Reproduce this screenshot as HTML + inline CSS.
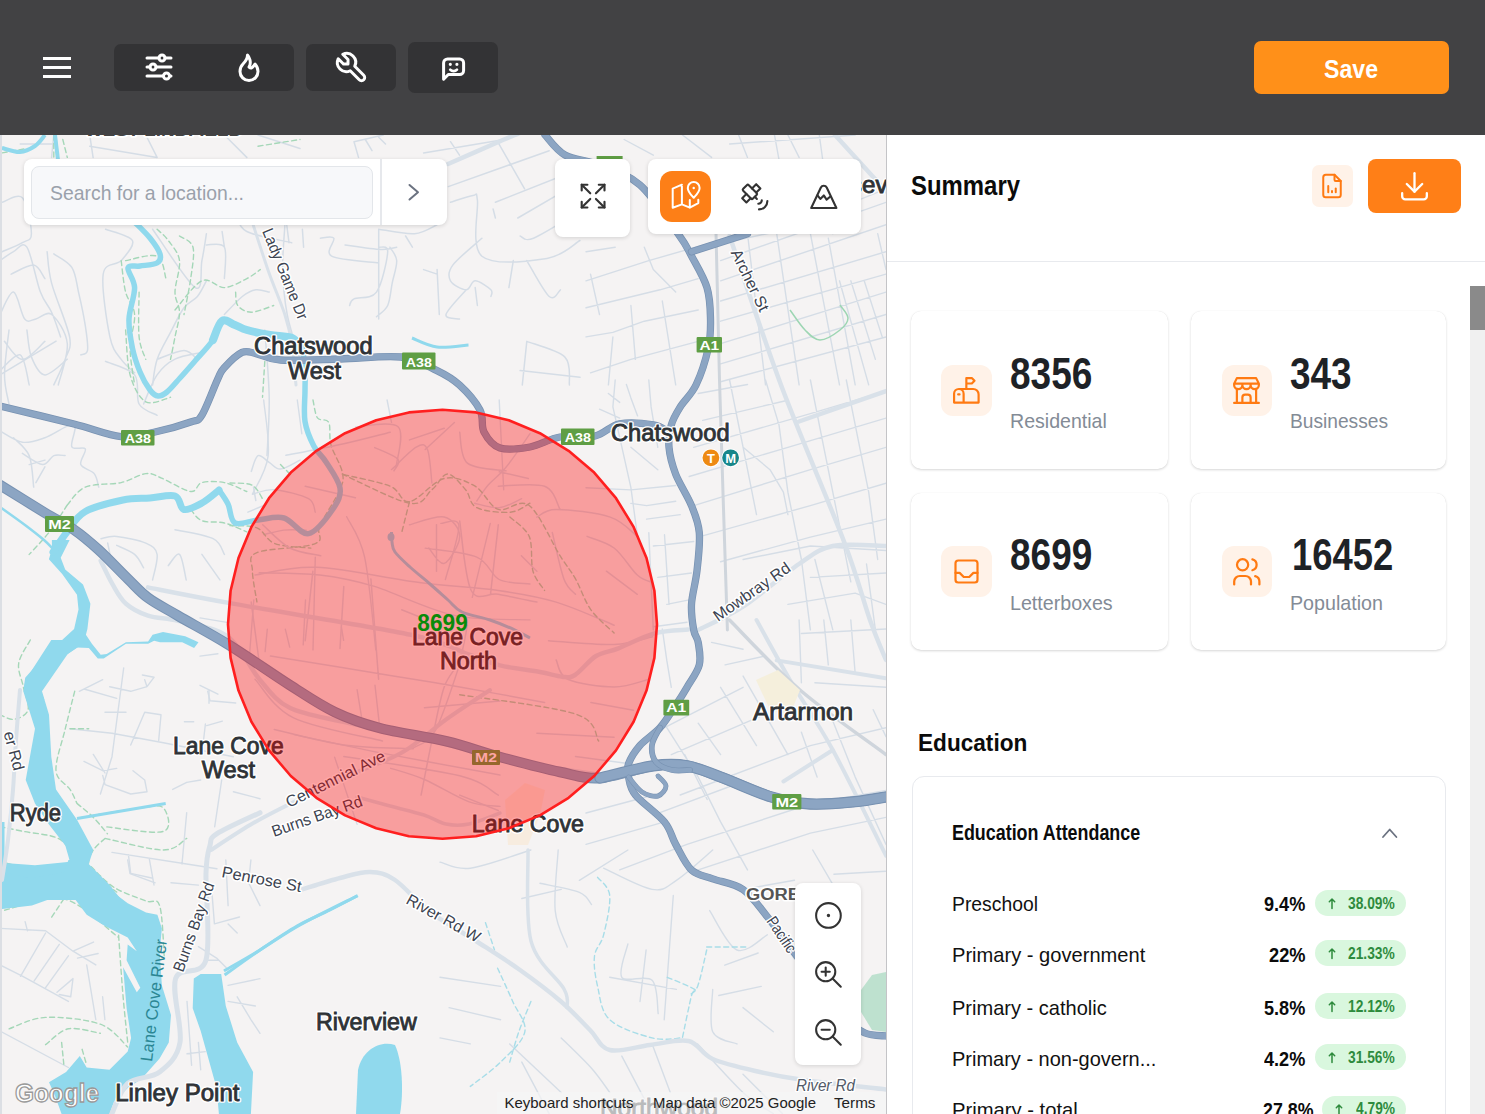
<!DOCTYPE html>
<html><head><meta charset="utf-8">
<style>
*{box-sizing:border-box;margin:0;padding:0}
html,body{width:1485px;height:1114px;overflow:hidden;background:#fff;font-family:"Liberation Sans",sans-serif}
.abs{position:absolute}
.t{position:absolute;line-height:1;white-space:nowrap;transform-origin:0 0}
#hdr{position:absolute;left:0;top:0;width:1485px;height:135px;background:#424244}
.hb{position:absolute;background:#333335;border-radius:7px}
#map{position:absolute;left:0;top:135px;width:886px;height:979px;overflow:hidden;background:#f5f3f3}
#panel{position:absolute;left:887px;top:135px;width:598px;height:979px;background:#fff;overflow:hidden}
.card{position:absolute;background:#fff;border-radius:10px;box-shadow:0 1px 2.5px rgba(0,0,0,0.16),0 0 0.5px rgba(0,0,0,0.10)}
.ibox{position:absolute;border-radius:12px;background:#fff2e8}
.pill{position:absolute;height:26px;border-radius:13px;background:#d9f7de}
.ctl{position:absolute;background:#fff;border-radius:8px;box-shadow:0 1px 4px rgba(0,0,0,0.14)}
svg.abs{overflow:visible}
</style></head>
<body>
<div id="hdr">
  <div class="abs" style="left:43px;top:57px;width:28px;height:3px;background:#fff"></div>
  <div class="abs" style="left:43px;top:66px;width:28px;height:3px;background:#fff"></div>
  <div class="abs" style="left:43px;top:75px;width:28px;height:3px;background:#fff"></div>
  <div class="hb" style="left:114px;top:44px;width:180px;height:47px"></div>
  <div class="hb" style="left:306px;top:44px;width:90px;height:47px"></div>
  <div class="hb" style="left:408px;top:42px;width:90px;height:51px"></div>
  <!-- sliders -->
  <svg class="abs" style="left:140.8px;top:49.4px" width="36" height="36" viewBox="0 0 24 24" fill="none" stroke="#fff" stroke-width="2" stroke-linecap="round" stroke-linejoin="round"><path d="M14 6m-2 0a2 2 0 1 0 4 0a2 2 0 1 0 -4 0"/><path d="M4 6l8 0"/><path d="M16 6l4 0"/><path d="M8 12m-2 0a2 2 0 1 0 4 0a2 2 0 1 0 -4 0"/><path d="M4 12l2 0"/><path d="M10 12l10 0"/><path d="M17 18m-2 0a2 2 0 1 0 4 0a2 2 0 1 0 -4 0"/><path d="M4 18l11 0"/><path d="M19 18l1 0"/></svg>
  <!-- flame -->
  <svg class="abs" style="left:231px;top:49.4px" width="36" height="36" viewBox="0 0 24 24" fill="none" stroke="#fff" stroke-width="2" stroke-linecap="round" stroke-linejoin="round"><path d="M12 12c2 -2.96 0 -7 -1 -8c0 3.038 -1.773 4.741 -3 6c-1.226 1.26 -2 3.24 -2 5a6 6 0 1 0 12 0c0 -1.532 -1.056 -3.94 -2 -5c-1.786 3 -2.791 3 -4 2z"/></svg>
  <!-- wrench -->
  <svg class="abs" style="left:332.85px;top:49.4px" width="36" height="36" viewBox="0 0 24 24" fill="none" stroke="#fff" stroke-width="2" stroke-linecap="round" stroke-linejoin="round"><path d="M7 10h3v-3l-3.5 -3.5a6 6 0 0 1 8 8l6 6a2 2 0 0 1 -3 3l-6 -6a6 6 0 0 1 -8 -8l3.5 3.5"/></svg>
  <!-- chat -->
  <svg class="abs" style="left:0;top:0" width="1" height="1" fill="none" stroke="#fff" stroke-width="3" stroke-linecap="round" stroke-linejoin="round"><path d="M443.6 79.2V63a4 4 0 0 1 4 -4h12a4 4 0 0 1 4 4v7.5a4 4 0 0 1 -4 4H448.3z"/><path d="M450.3 64.3h.01M456.9 64.3h.01" stroke-width="3.2"/><path d="M450.2 69.6a4.6 4.6 0 0 0 6.8 0" stroke-width="2.6"/></svg>
  <div class="abs" style="left:1254px;top:41px;width:195px;height:53px;background:#ff9019;border-radius:7px"></div>
<div class="t" style="left:1324.4px;top:55.7px;font-size:26px;font-weight:bold;color:#fff;transform:scaleX(0.8891);">Save</div>
</div>

<div id="map">
<svg width="886" height="979" viewBox="0 135 886 979" style="position:absolute;left:0;top:0;display:block">
<rect x="0" y="135" width="886" height="979" fill="#f5f3f3"/>
<path d="M20.2 144.0 L53.8 144.0 M89.7 146.2 L157.1 157.4 M145.8 135.0 L157.1 157.4 M89.7 135.0 L93.1 157.4 M2.2 202.3 C5.6 201.6 17.6 192.6 22.4 197.8 C27.3 203.1 31.4 226.2 31.4 233.7 C31.4 241.2 27.3 239.7 22.4 242.7 C17.6 245.7 5.6 250.2 2.2 251.7 M0.0 260.6 C2.2 259.1 9.0 253.9 13.5 251.7 C17.9 249.4 22.4 240.5 26.9 247.2 C31.4 253.9 36.3 281.2 40.4 292.1 C44.5 302.9 48.2 304.8 51.6 312.2 C55.0 319.7 59.1 332.8 60.6 336.9 M47.1 251.7 C47.9 256.9 47.9 268.9 51.6 283.1 C55.3 297.3 67.3 324.2 69.6 336.9 C71.8 349.6 67.7 351.4 65.1 359.4 C62.4 367.4 55.7 380.7 53.8 384.9 M53.8 253.9 C56.8 256.2 67.7 261.0 71.8 267.4 C75.9 273.7 76.3 282.3 78.5 292.1 C80.8 301.8 83.8 316.0 85.3 325.7 C86.8 335.4 88.3 345.5 87.5 350.4 C86.8 355.3 81.9 354.1 80.8 354.9 M11.2 274.1 C15.0 272.6 28.0 264.4 33.7 265.1 C39.3 265.9 43.0 276.4 44.9 278.6 M0.0 314.5 C2.2 310.8 9.3 291.3 13.5 292.1 C17.6 292.8 20.9 314.5 24.7 319.0 C28.4 323.5 31.4 319.7 35.9 319.0 C40.4 318.2 46.4 310.4 51.6 314.5 C56.8 318.6 66.2 331.9 67.3 343.7 C68.4 355.4 59.8 378.1 58.3 384.9 M4.5 341.4 C7.5 344.4 15.7 359.4 22.4 359.4 C29.2 359.4 41.1 344.4 44.9 341.4 M0.0 370.6 C3.4 368.0 15.3 352.5 20.2 354.9 C25.1 357.3 27.7 379.9 29.2 384.9 M105.5 229.2 C109.9 231.1 129.8 235.2 132.4 240.5 C135.0 245.7 126.0 255.0 121.2 260.6 C116.3 266.3 105.1 261.4 103.2 274.1 C101.3 286.8 106.9 322.7 109.9 336.9 C112.9 351.1 117.0 353.4 121.2 359.4 C125.3 365.3 132.4 370.6 134.6 372.8 M152.6 229.2 C159.7 239.0 187.0 282.3 195.2 287.6 C203.4 292.8 200.1 269.6 201.9 260.6 C203.8 251.7 205.7 238.2 206.4 233.7 M206.4 280.8 C204.9 283.5 201.2 292.1 197.4 296.5 C193.7 301.0 188.5 301.8 184.0 307.8 C179.5 313.7 175.0 323.8 170.5 332.4 C166.0 341.0 160.0 350.6 157.1 359.4 C154.1 368.1 153.3 380.7 152.6 384.9 M206.4 244.9 C209.4 245.3 221.4 241.6 224.4 247.2 C227.4 252.8 224.4 273.4 224.4 278.6 M157.1 359.4 C161.5 357.9 177.2 350.4 184.0 350.4 C190.7 350.4 195.2 357.9 197.4 359.4 M284.9 224.7 C284.6 232.2 282.3 254.7 282.7 269.6 C283.1 284.6 284.3 299.5 287.2 314.5 C290.1 329.5 297.8 351.9 300.0 359.4 M269.2 292.1 C267.0 291.7 260.3 289.1 255.8 289.8 C251.3 290.6 247.6 292.4 242.3 296.5 C237.1 300.7 227.4 311.5 224.4 314.5 M235.6 213.5 C237.5 216.5 237.5 226.6 246.8 231.5 C256.2 236.3 284.2 240.8 291.7 242.7 M222.1 231.5 L224.4 247.2 M53.8 135.0 L51.6 157.4 M224.4 135.0 L246.8 157.4 M258.0 135.0 L300.0 148.5" fill="none" stroke="#d5dde6" stroke-width="1.5" stroke-linejoin="round" stroke-linecap="round"/>
<path d="M250.0 215.0 C253.0 224.2 262.2 253.3 268.0 270.0 C273.8 286.7 281.0 302.5 285.0 315.0 C289.0 327.5 290.2 333.3 292.0 345.0 C293.8 356.7 295.3 378.3 296.0 385.0" fill="none" stroke="#d9e1e9" stroke-width="3" stroke-linejoin="round" stroke-linecap="round"/>
<path d="M354.0 141.7 L383.2 135.0 M354.0 141.7 L358.5 157.4 M365.3 139.5 L372.0 150.7 M378.7 137.2 L385.5 144.0 M423.6 152.9 L504.4 139.5 M450.5 141.7 L459.5 155.2 M497.6 141.7 L524.6 188.8 M448.3 186.6 L549.2 150.7 M450.5 202.3 C454.3 201.2 468.5 196.0 473.0 195.6 C477.4 195.2 475.9 190.0 477.4 200.1 C478.9 210.2 470.3 246.4 481.9 256.2 C493.5 265.9 530.7 261.0 547.0 258.4 C563.3 255.8 574.5 243.4 580.0 240.5 M493.1 209.0 L495.4 218.0 M495.4 202.3 L580.0 168.7 M517.8 218.0 L571.7 186.6 M520.1 236.0 C522.3 236.3 523.5 242.3 533.5 238.2 C543.5 234.1 572.2 215.8 580.0 211.3 M286.7 224.7 L289.0 242.7 M302.4 229.2 L303.6 247.2 M320.4 238.2 C322.6 238.2 332.0 235.2 333.8 238.2 C335.7 241.2 324.1 252.0 331.6 256.2 C339.1 260.3 370.9 261.8 378.7 262.9 M378.7 229.2 L378.7 319.0 M345.1 244.9 C351.0 245.7 372.4 249.1 381.0 249.4 C389.6 249.8 394.1 247.6 396.7 247.2 M378.7 229.2 C384.7 230.0 404.9 234.5 414.6 233.7 C424.3 233.0 433.3 226.2 437.1 224.7 M405.6 236.0 L412.4 247.2 M378.7 247.2 C380.2 247.9 388.1 244.2 387.7 251.7 C387.3 259.1 382.1 284.2 376.5 292.1 C370.9 299.9 358.5 296.5 354.0 298.8 C349.6 301.0 350.3 304.4 349.6 305.5 M389.9 247.2 C391.1 249.4 396.3 254.7 396.7 260.6 C397.0 266.6 393.7 275.6 392.2 283.1 C390.7 290.6 390.3 299.9 387.7 305.5 C385.1 311.1 378.3 314.9 376.5 316.7 M481.9 238.2 C477.1 242.7 458.0 258.0 452.8 265.1 C447.5 272.2 448.3 276.7 450.5 280.8 C452.8 285.0 462.1 289.8 466.2 289.8 C470.3 289.8 471.1 280.8 475.2 280.8 C479.3 280.8 488.3 287.2 490.9 289.8 C493.5 292.4 490.9 295.4 490.9 296.5 M475.2 287.6 L477.4 305.5 M466.2 289.8 C462.9 293.9 447.2 309.6 446.0 314.5 C444.9 319.4 457.2 318.2 459.5 319.0 M513.3 260.6 L508.9 287.6 M526.8 260.6 C530.5 266.6 543.6 291.7 549.2 296.5 C554.8 301.4 558.6 290.9 560.5 289.8 M526.8 341.4 L522.3 384.9 M526.8 341.4 C533.2 344.0 557.8 349.9 564.9 357.1 C572.0 364.4 568.7 380.3 569.4 384.9 M520.1 370.6 L580.0 377.3 M437.1 269.6 L439.3 314.5 M423.6 269.6 L437.1 274.1" fill="none" stroke="#d5dde6" stroke-width="1.5" stroke-linejoin="round" stroke-linecap="round"/>
<path d="M586.0 280.8 L648.8 260.6 L711.6 242.7 M586.0 307.8 L660.0 289.8 L698.2 278.6 M586.0 336.9 L612.9 332.4 L644.3 321.2 L698.2 310.0 M590.5 372.8 L630.9 359.4 L698.2 341.4 M725.1 242.7 L787.9 229.2 L886.0 188.8 M720.6 260.6 L886.0 202.3 M720.6 280.8 L886.0 224.7 M720.6 301.0 L886.0 251.7 M720.6 321.2 L886.0 274.1 M720.6 343.7 L886.0 292.1 M720.6 363.9 L886.0 314.5 M720.6 381.8 L886.0 336.9 M738.6 135.0 L747.5 157.4 M774.5 135.0 L779.0 159.7 M624.1 139.5 L653.3 155.2 M682.5 135.0 L711.6 157.4 M729.6 144.0 L855.2 135.0 M747.5 233.7 L765.5 384.9 M776.7 233.7 L799.1 384.9 M810.4 233.7 L839.5 384.9 M828.3 238.2 L855.2 384.9 M839.5 280.8 L868.7 384.9 M850.8 280.8 L875.4 359.4 M864.2 280.8 L882.2 336.9 M877.7 233.7 L886.0 269.6 M586.0 251.7 L615.2 247.2 M590.5 274.1 L599.5 314.5 M630.9 305.5 L635.4 359.4 M644.3 247.2 L653.3 269.6 L675.7 292.1 M612.9 336.9 L608.4 384.9 M662.3 301.0 L675.7 384.9 M819.3 135.0 L832.8 233.7 M787.9 135.0 L799.1 157.4" fill="none" stroke="#d5dde6" stroke-width="1.4" stroke-linejoin="round" stroke-linecap="round"/>
<path d="M0.0 374.9 C3.7 372.6 13.1 367.0 22.4 361.4 C31.8 355.8 50.5 344.6 56.1 341.2 M9.0 330.0 C8.2 337.5 4.5 362.5 4.5 374.9 C4.5 387.2 8.2 399.2 9.0 404.0 M26.9 330.0 C27.7 334.5 28.4 349.4 31.4 356.9 C34.4 364.4 38.9 374.5 44.9 374.9 C50.9 375.2 63.6 361.8 67.3 359.2 M0.0 431.0 C3.7 432.8 15.0 441.1 22.4 442.2 C29.9 443.3 36.3 440.7 44.9 437.7 C53.5 434.7 69.6 422.7 74.0 424.2 C78.5 425.7 69.9 442.6 71.8 446.7 C73.7 450.8 83.8 445.9 85.3 448.9 C86.8 451.9 79.3 460.5 80.8 464.6 C82.3 468.7 91.2 469.9 94.2 473.6 C97.2 477.3 98.0 484.8 98.7 487.1 M13.5 437.7 C16.1 440.7 25.8 447.4 29.2 455.6 C32.5 463.9 32.9 481.8 33.7 487.1 M22.4 453.4 C25.8 455.3 37.4 464.2 42.6 464.6 C47.9 465.0 50.1 457.1 53.8 455.6 C57.6 454.1 63.2 455.6 65.1 455.6 M29.2 464.6 L44.9 460.1 M35.9 482.6 L44.9 466.9 M105.5 361.4 C110.3 363.7 129.0 367.8 134.6 374.9 C140.2 382.0 135.4 397.3 139.1 404.0 C142.8 410.8 154.1 413.4 157.1 415.3 M143.6 404.0 C145.8 399.2 151.8 382.4 157.1 374.9 C162.3 367.4 167.5 362.9 175.0 359.2 C182.5 355.4 197.4 353.6 201.9 352.4 M251.3 471.4 C252.4 468.7 255.0 457.1 258.0 455.6 C261.0 454.1 265.5 460.1 269.2 462.4 C273.0 464.6 275.3 469.5 280.5 469.1 C285.6 468.7 296.7 461.6 300.0 460.1 M253.5 487.1 L255.8 500.5 M264.8 330.0 C265.5 341.2 268.9 376.4 269.2 397.3 C269.6 418.3 267.4 445.9 267.0 455.6 M101.0 538.7 C103.6 538.3 109.2 535.7 116.7 536.4 C124.1 537.2 139.1 540.2 145.8 543.1 C152.6 546.1 155.9 548.2 157.1 554.4 C158.2 560.5 153.3 575.7 152.6 579.9 M107.7 543.1 L112.2 565.6 M116.7 545.4 C119.7 546.9 130.1 550.6 134.6 554.4 C139.1 558.1 142.1 565.6 143.6 567.8 M175.0 529.7 C181.4 531.2 204.9 534.5 213.1 538.7 C221.4 542.8 222.5 551.7 224.4 554.4 M168.3 565.6 C170.1 563.7 176.5 552.0 179.5 554.4 C182.5 556.8 185.1 575.7 186.2 579.9 M201.9 554.4 L219.9 579.9" fill="none" stroke="#d5dde6" stroke-width="1.5" stroke-linejoin="round" stroke-linecap="round"/>
<path d="M586.0 487.7 L630.9 489.9 L675.7 485.5 M630.9 503.4 L646.6 505.6 L675.7 501.2 M599.5 409.2 L619.7 418.1 M608.4 393.5 L619.7 402.4 M626.4 384.5 L630.9 397.9 L637.6 415.9 M615.2 380.0 L612.9 406.9 L630.9 487.7 L637.6 537.1 M648.8 380.0 L651.1 406.9 L657.8 447.3 M630.9 447.3 L657.8 469.7 M646.6 519.1 L680.2 514.6 M653.3 546.0 L693.7 541.5 M657.8 577.4 L691.5 573.0 M666.8 604.4 L689.2 599.9 M648.8 532.6 L653.3 629.9 M664.5 534.8 L669.0 604.4 M698.2 393.5 L747.5 384.5 M702.7 420.4 L787.9 400.2 M693.7 447.3 L810.4 413.7 L886.0 391.2 M689.2 476.5 L787.9 447.3 L886.0 418.1 M693.7 505.6 L810.4 469.7 L886.0 447.3 M698.2 537.1 L810.4 505.6 L886.0 483.2 M720.6 561.7 L810.4 537.1 L886.0 519.1 M729.6 380.0 L743.1 447.3 L756.5 514.6 M765.5 380.0 L779.0 424.9 L787.9 492.2 L801.4 559.5 L810.4 629.9 M810.4 380.0 L823.8 447.3 L837.3 514.6 L850.8 581.9 M846.3 380.0 L855.2 424.9 L868.7 492.2 L877.7 559.5 M743.1 447.3 L770.0 469.7 L783.4 492.2 L787.9 514.6 M743.1 559.5 L810.4 546.0 L886.0 550.5 M810.4 577.4 L886.0 573.0 M787.9 604.4 L855.2 593.1 L886.0 604.4 M814.9 559.5 L832.8 629.9 M866.5 564.0 L875.4 629.9" fill="none" stroke="#d5dde6" stroke-width="1.4" stroke-linejoin="round" stroke-linecap="round"/>
<path d="M653.3 626.7 L687.0 622.2 M662.3 629.0 L666.8 660.4 L671.3 687.3 M666.8 727.7 L698.2 777.1 L720.6 821.9 L747.5 869.9 M698.2 723.2 L720.6 754.6 M684.7 754.6 L707.2 799.5 M664.5 727.7 L743.1 687.3 M671.3 754.6 L765.5 714.2 M680.2 795.0 L810.4 745.6 L886.0 727.7 M653.3 815.2 L743.1 781.5 M687.0 844.4 L810.4 804.0 L886.0 790.5 M698.2 869.9 L810.4 833.1 L886.0 817.4 M586.0 813.0 L653.3 795.0 M586.0 844.4 L664.5 821.9 M619.7 869.9 L687.0 844.4 M814.9 682.8 L886.0 687.3 M801.4 633.5 L886.0 629.0 M850.8 620.0 L855.2 673.8 M823.8 620.0 L828.3 664.9 M799.1 620.0 L801.4 682.8 M832.8 721.0 L855.2 777.1 L886.0 844.4 M801.4 732.2 L817.1 777.1 M873.2 709.7 L886.0 736.7 M720.6 687.3 L756.5 745.6 M743.1 676.1 L787.9 754.6 M711.6 642.4 L743.1 649.2 M725.1 664.9 L765.5 655.9" fill="none" stroke="#d5dde6" stroke-width="1.4" stroke-linejoin="round" stroke-linecap="round"/>
<path d="M440.0 862.1 C445.1 863.1 455.2 870.2 470.3 868.2 C485.5 866.2 520.8 853.0 530.9 850.0 M440.0 977.3 L500.6 986.4 M449.1 1007.6 L500.6 1019.7 M440.0 1037.9 L470.3 1043.9 M509.7 1043.9 L561.2 1092.4 M521.8 1062.1 L549.1 1113.6 M561.2 1037.9 C566.3 1042.9 583.4 1059.1 591.5 1068.2 C599.6 1077.3 606.7 1088.4 609.7 1092.4 M621.8 1056.1 L652.1 1113.6 M652.1 1043.9 L670.3 1092.4 M697.6 1043.9 C705.2 1052.0 730.4 1080.8 743.0 1092.4 C755.7 1104.0 768.3 1110.1 773.3 1113.6 M743.0 1074.2 L782.4 1113.6 M558.2 850.0 C557.7 860.1 553.6 894.4 555.2 910.6 C556.7 926.8 565.3 940.9 567.3 947.0 M579.4 880.3 L627.9 850.0 M603.6 868.2 C611.7 871.7 640.0 887.4 652.1 889.4 C664.2 891.4 666.3 886.9 676.4 880.3 C686.5 873.7 706.7 855.1 712.7 850.0 M540.0 883.3 C546.6 884.8 570.8 888.9 579.4 892.4 C588.0 896.0 589.5 902.5 591.5 904.5 M521.8 898.5 L561.2 889.4 M627.9 943.9 C626.9 949.5 617.8 971.2 621.8 977.3 C625.9 983.3 646.1 974.2 652.1 980.3 C658.2 986.4 657.2 1008.1 658.2 1013.6 M646.1 950.0 L640.0 1001.5 M673.3 895.5 L664.2 1019.7 M609.7 977.3 L676.4 989.4 M709.7 910.6 C714.2 917.2 727.4 946.0 737.0 950.0 C746.6 954.0 762.2 937.4 767.3 934.8 M724.8 965.2 L758.2 953.0 M712.7 989.4 C712.7 996.5 708.7 1022.7 712.7 1031.8 C716.8 1040.9 732.9 1041.9 737.0 1043.9 M718.8 995.5 L761.2 986.4 M743.0 1007.6 L773.3 1031.8 M743.0 889.4 L794.5 880.3 M773.3 925.8 L794.5 959.1 M833.9 874.2 L885.5 871.2 M812.7 850.0 L833.9 886.4" fill="none" stroke="#d5dde6" stroke-width="1.4" stroke-linejoin="round" stroke-linecap="round"/>
<path d="M355.6 426.9 C362.7 426.9 391.5 420.2 398.3 426.9 C405.0 433.7 396.4 460.6 396.0 467.3 M391.5 469.6 C395.7 465.8 410.2 450.5 416.2 447.1 C422.2 443.8 424.8 443.4 427.4 449.4 C430.1 455.3 431.2 477.4 431.9 483.0 M425.2 449.4 L454.4 422.4 M476.8 501.0 C478.7 498.3 483.2 490.9 488.0 485.3 C492.9 479.6 499.0 475.9 506.0 467.3 C513.0 458.7 526.0 439.3 530.0 433.7 M499.2 471.8 L528.4 478.5 M474.6 503.2 C478.7 504.0 491.4 508.4 499.2 507.7 C507.1 506.9 517.9 500.2 521.7 498.7 M440.9 523.4 C443.9 523.8 458.1 516.3 458.9 525.6 C459.6 535.0 447.6 570.5 445.4 579.5 M425.2 548.1 C433.8 549.6 464.5 551.8 476.8 557.1 C489.1 562.3 490.4 575.0 499.2 579.5 C508.1 584.0 524.9 583.2 530.0 584.0 M490.3 523.4 L472.3 597.4 M346.7 516.7 C349.7 523.4 359.8 534.8 364.6 557.1 C369.5 579.3 374.0 634.5 375.8 649.9 M315.3 557.1 L313.0 649.9 M259.2 572.8 C269.3 573.1 300.7 572.8 319.7 575.0 C338.8 577.2 351.2 579.5 373.6 586.2 C396.0 593.0 428.3 609.8 454.4 615.4 C480.4 621.0 517.4 619.1 530.0 619.9 M252.4 494.2 C256.2 493.5 265.5 489.0 274.9 489.7 C284.2 490.5 301.8 495.0 308.5 498.7 C315.3 502.5 314.1 509.9 315.3 512.2 M247.9 512.2 L263.7 505.5 M263.7 534.6 C267.0 533.9 276.7 530.9 283.8 530.1 C291.0 529.4 302.5 530.1 306.3 530.1 M499.2 400.0 L503.7 489.7 M387.1 400.0 L391.5 422.4 M297.3 400.0 L301.8 433.7 M263.7 400.0 C264.4 409.3 270.0 440.4 268.1 456.1 C266.3 471.8 255.1 487.9 252.4 494.2" fill="none" stroke="#d5dde6" stroke-width="1.4" stroke-linejoin="round" stroke-linecap="round"/>
<path d="M253.8 600.0 L249.4 656.1 M267.3 629.2 L265.1 651.6 M285.3 629.2 L289.7 647.1 M305.5 600.0 L303.2 644.9 M341.4 626.9 L343.6 640.4 M294.2 734.6 C308.4 737.6 345.2 745.8 379.5 752.6 C413.8 759.3 479.9 771.3 500.0 775.0 M334.6 757.1 L357.1 824.4 M390.7 768.3 C396.3 770.1 411.3 773.9 424.4 779.5 C437.5 785.1 456.6 797.4 469.2 801.9 C481.8 806.4 494.9 805.7 500.0 806.4 M460.3 662.8 C456.2 674.0 443.4 715.9 435.6 730.1 C427.7 744.3 416.9 745.1 413.1 748.1 M200.0 617.9 L226.9 622.4 M200.0 656.1 L217.9 653.8 M206.7 725.6 L222.4 721.2 M200.0 685.3 L217.9 694.2 M209.0 689.7 L209.0 703.2 M357.1 689.7 L361.5 716.7 M375.0 685.3 L379.5 725.6 M424.4 707.7 L500.0 701.0" fill="none" stroke="#d5dde6" stroke-width="1.4" stroke-linejoin="round" stroke-linecap="round"/>
<path d="M79.3 691.3 L102.7 679.7 M84.0 689.0 L116.7 698.3 M123.7 668.0 L112.0 756.7 L100.4 794.0 M105.0 712.3 L126.0 712.3 M142.4 675.0 L154.0 677.3 L147.0 686.7 L130.7 691.3 L109.7 686.7 M144.7 679.7 L147.0 686.7 M70.0 728.7 L112.0 733.3 L163.4 742.7 L233.4 756.7 M130.7 745.0 L144.7 712.3 L161.0 714.7 L158.7 740.4 M133.0 770.7 L144.7 780.0 L147.0 791.7 L130.7 794.0 L105.0 784.7 L102.7 775.4 M84.0 761.4 L102.7 770.7 L116.7 768.4 M93.3 754.4 L105.0 773.0 M172.7 789.4 L186.7 782.4 L200.7 780.0 M207.7 691.3 L210.0 700.7 L235.7 703.0 M205.4 724.0 L203.0 745.0 M184.4 721.7 L193.7 721.7 M112.0 852.4 L186.7 864.0 L217.0 868.7 M128.4 854.7 L130.7 873.4 L151.7 878.0 M149.4 859.4 L154.0 885.0 M186.7 812.7 L182.0 864.0 M221.7 780.0 L214.7 826.7 M233.4 791.7 L260.0 798.7" fill="none" stroke="#d5dde6" stroke-width="1.4" stroke-linejoin="round" stroke-linecap="round"/>
<path d="M0.0 928.4 L45.6 930.7 L73.0 951.2 L95.8 964.9 M0.0 964.9 L22.8 976.3 L68.4 1001.4 M20.5 976.3 L45.6 933.0 M34.2 980.9 L59.3 944.4 M45.6 987.7 L68.4 955.8 M57.0 992.3 L73.0 978.6 L70.7 996.8 L59.3 994.5 M73.0 951.2 L93.5 942.1 M77.5 958.1 L98.1 953.5 M86.7 964.9 L95.8 1019.6 M102.6 996.8 L104.9 1019.6 M0.0 1031.0 L68.4 1067.5 M25.1 921.6 L27.4 930.7 M127.7 860.0 L130.0 873.7 L155.1 882.8 M171.0 882.8 L198.4 885.1 M212.1 894.2 L214.4 923.9 L239.5 917.0 M228.1 923.9 L237.2 933.0 M225.8 860.0 L228.1 905.6 M250.9 860.0 L248.6 882.8 L260.0 905.6 M198.4 946.7 L216.6 958.1 L228.1 969.5 M205.2 960.3 L218.9 960.3 M228.1 985.4 L260.0 978.6 M237.2 996.8 L250.9 1019.6 L260.0 1033.3 M228.1 1001.4 L255.4 1006.0 M187.0 1001.4 L191.6 1065.2 M198.4 1042.4 L200.7 1069.8 M187.0 1053.8 L205.2 1051.6" fill="none" stroke="#d5dde6" stroke-width="1.4" stroke-linejoin="round" stroke-linecap="round"/>
<path d="M121.2 260.6 C121.9 265.9 123.4 283.1 125.6 292.1 C127.9 301.0 133.9 305.1 134.6 314.5 C135.4 323.8 130.1 336.4 130.1 348.1 C130.1 359.9 133.9 378.8 134.6 384.9 M157.1 229.2 C158.9 231.1 164.5 235.2 168.3 240.5 C172.0 245.7 178.4 252.0 179.5 260.6 C180.6 269.2 175.0 283.5 175.0 292.1 C175.0 300.7 179.5 304.8 179.5 312.2 C179.5 319.7 176.5 329.1 175.0 336.9 C173.5 344.8 171.3 355.6 170.5 359.4 M139.1 292.1 C139.1 299.5 138.0 325.7 139.1 336.9 C140.2 348.1 144.7 355.6 145.8 359.4 M125.6 260.6 C130.9 259.9 150.3 253.2 157.1 256.2 C163.8 259.1 164.5 274.9 166.0 278.6 M179.5 236.0 C181.7 237.8 191.1 240.1 193.0 247.2 C194.8 254.3 192.2 267.4 190.7 278.6 C189.2 289.8 185.1 308.5 184.0 314.5 M175.0 310.0 C179.5 305.1 193.7 284.6 201.9 280.8 C210.2 277.1 216.9 287.9 224.4 287.6 C231.8 287.2 240.8 281.6 246.8 278.6 C252.8 275.6 258.0 271.1 260.3 269.6 M235.6 292.1 C236.0 294.3 235.2 302.2 237.8 305.5 C240.4 308.9 245.3 312.2 251.3 312.2 C257.3 312.2 270.0 306.6 273.7 305.5 M53.8 135.0 L53.8 157.4 M62.8 139.5 L67.3 157.4 M2.2 152.9 L26.9 148.5 M258.0 146.2 L300.0 139.5" fill="none" stroke="#a5d7b8" stroke-width="1.4" stroke-linejoin="round" stroke-linecap="round" stroke-dasharray="5 3.5"/>
<path d="M67.3 505.0 C70.3 502.0 76.3 490.8 85.3 487.1 C94.2 483.3 111.1 484.8 121.2 482.6 C131.3 480.3 139.1 474.3 145.8 473.6 C152.6 472.8 154.1 475.1 161.5 478.1 C169.0 481.1 184.0 490.8 190.7 491.5 C197.4 492.3 196.3 484.1 201.9 482.6 C207.5 481.1 216.9 481.1 224.4 482.6 C231.8 484.1 243.1 490.0 246.8 491.5 M190.7 509.5 C192.6 511.4 196.3 518.5 201.9 520.7 C207.5 523.0 216.9 521.1 224.4 523.0 C231.8 524.8 243.1 530.4 246.8 531.9 M125.6 330.0 C126.4 337.5 126.8 362.9 130.1 374.9 C133.5 386.8 139.1 398.1 145.8 401.8 C152.6 405.5 166.4 398.1 170.5 397.3 M67.3 505.0 C64.3 509.5 55.7 523.7 49.4 531.9 C43.0 540.2 32.5 550.6 29.2 554.4 M264.8 361.4 L262.5 397.3 M280.5 464.6 L291.7 475.8" fill="none" stroke="#a5d7b8" stroke-width="1.4" stroke-linejoin="round" stroke-linecap="round" stroke-dasharray="5 3.5"/>
<path d="M313.0 400.0 C313.8 403.0 314.9 414.2 317.5 417.9 C320.1 421.7 326.5 417.9 328.7 422.4 C331.0 426.9 328.7 436.6 331.0 444.9 C333.2 453.1 340.7 464.3 342.2 471.8 C343.7 479.3 343.7 480.8 339.9 489.7 C336.2 498.7 323.9 516.7 319.7 525.6 C315.6 534.6 325.7 539.1 315.3 543.6 C304.8 548.1 267.4 548.1 256.9 552.6 C246.5 557.1 252.4 562.3 252.4 570.5 C252.4 578.7 256.2 596.7 256.9 601.9 M342.2 474.0 C353.4 478.9 394.5 500.6 409.5 503.2 C424.5 505.8 425.6 494.6 431.9 489.7 C438.3 484.9 442.0 474.0 447.6 474.0 C453.2 474.0 460.7 484.1 465.6 489.7 C470.4 495.4 469.3 504.0 476.8 507.7 C484.3 511.4 501.6 512.9 510.5 512.2 C519.3 511.4 526.7 504.7 530.0 503.2 M230.0 483.0 C233.7 483.4 246.8 482.3 252.4 485.3 C258.0 488.3 261.8 498.3 263.7 501.0 M230.0 525.6 C234.5 526.0 249.4 524.9 256.9 527.9 C264.4 530.9 265.9 540.2 274.9 543.6 C283.8 547.0 304.8 547.3 310.8 548.1" fill="none" stroke="#a5d7b8" stroke-width="1.4" stroke-linejoin="round" stroke-linecap="round" stroke-dasharray="5 3.5"/>
<path d="M30.3 640.0 C28.4 643.9 19.8 655.6 18.7 663.3 C17.5 671.1 21.8 678.9 23.3 686.7 C24.9 694.5 29.6 704.6 28.0 710.0 C26.4 715.5 18.7 718.6 14.0 719.3 C9.3 720.1 2.3 715.5 0.0 714.7 M74.7 691.3 C73.1 697.6 68.5 715.5 65.3 728.7 C62.2 741.9 55.2 760.6 56.0 770.7 C56.8 780.8 66.5 783.9 70.0 789.4 C73.5 794.8 75.8 801.0 77.0 803.4 M70.0 728.7 L88.7 728.7 M105.0 838.4 C114.7 840.3 149.7 850.0 163.4 850.0 C177.0 850.0 182.8 840.3 186.7 838.4 M105.0 838.4 C103.1 840.3 96.1 845.8 93.3 850.0 C90.6 854.3 87.9 859.4 88.7 864.0 C89.5 868.7 93.3 873.4 98.0 878.0 C102.7 882.7 113.6 889.7 116.7 892.0 M0.0 826.7 C3.9 827.5 13.6 829.4 23.3 831.4 C33.1 833.3 50.6 834.5 58.3 838.4 C66.1 842.3 68.8 849.3 70.0 854.7 C71.2 860.1 71.2 868.9 65.3 871.0 C59.5 873.2 44.3 868.7 35.0 867.5 C25.7 866.4 14.8 865.4 9.3 864.0 C3.9 862.7 3.5 860.1 2.3 859.4 M77.0 803.4 C79.7 805.7 88.3 812.3 93.3 817.4 C98.4 822.4 105.0 831.0 107.4 833.7 M81.7 817.4 C91.4 815.8 126.4 809.6 140.0 808.0 C153.6 806.5 159.5 804.1 163.4 808.0 C167.3 811.9 173.1 828.3 163.4 831.4 C153.6 834.5 114.7 827.5 105.0 826.7" fill="none" stroke="#a5d7b8" stroke-width="1.4" stroke-linejoin="round" stroke-linecap="round" stroke-dasharray="5 3.5"/>
<path d="M91.2 866.8 C95.0 870.3 104.9 881.7 114.0 887.4 C123.1 893.1 138.4 898.0 146.0 901.0 C153.6 904.1 156.6 896.5 159.6 905.6 C162.7 914.7 163.4 947.4 164.2 955.8 M118.6 935.3 C119.3 945.5 121.6 979.0 123.1 996.8 C124.7 1014.7 126.9 1034.8 127.7 1042.4 M9.1 1028.8 C15.2 1026.9 30.4 1018.1 45.6 1017.4 C60.8 1016.6 86.7 1019.3 100.3 1024.2 C114.0 1029.1 123.1 1043.2 127.7 1047.0 M45.6 1044.7 C49.4 1042.1 59.3 1030.7 68.4 1028.8 C77.5 1026.9 95.0 1032.6 100.3 1033.3 M61.6 1042.4 L63.9 1065.2 M82.1 1049.3 L86.7 1065.2 M4.6 910.2 C14.4 908.3 44.8 894.2 63.9 898.8 C82.9 903.3 109.5 931.1 118.6 937.5 M63.9 898.8 L50.2 919.3" fill="none" stroke="#a5d7b8" stroke-width="1.4" stroke-linejoin="round" stroke-linecap="round" stroke-dasharray="5 3.5"/>
<path d="M597.6 877.3 C599.6 880.3 608.7 885.9 609.7 895.5 C610.7 905.1 606.2 924.7 603.6 934.8 C601.1 944.9 595.6 947.5 594.5 956.1 C593.5 964.6 595.1 975.8 597.6 986.4 C600.1 997.0 600.6 1011.1 609.7 1019.7 C618.8 1028.3 640.0 1034.8 652.1 1037.9 C664.2 1040.9 677.4 1037.9 682.4 1037.9 M706.7 950.0 C705.2 956.1 700.6 978.8 697.6 986.4 C694.5 993.9 690.0 993.9 688.5 995.5 M667.3 977.3 C671.8 979.3 690.5 986.4 694.5 989.4 C698.6 992.4 693.5 987.4 691.5 995.5 C689.5 1003.5 683.9 1030.8 682.4 1037.9 M497.6 968.2 C500.1 973.7 508.2 990.9 512.7 1001.5 C517.3 1012.1 526.9 1021.7 524.8 1031.8 C522.8 1041.9 509.7 1053.0 500.6 1062.1 C491.5 1071.2 475.4 1082.3 470.3 1086.4 M530.9 1001.5 C528.9 1006.6 522.3 1021.7 518.8 1031.8 C515.3 1041.9 511.2 1057.1 509.7 1062.1 M485.5 922.7 L494.5 950.0 M706.7 947.0 L749.1 947.0" fill="none" stroke="#a8dde8" stroke-width="1.4" stroke-linejoin="round" stroke-linecap="round" stroke-dasharray="5 3.5"/>
<path d="M255.0 575.0 C265.3 573.7 289.1 566.0 316.8 567.3 C344.5 568.6 390.8 578.9 421.1 582.7 C451.3 586.6 475.7 587.2 498.3 590.5 C520.8 593.7 536.9 596.3 556.2 602.1 C575.5 607.8 604.4 621.4 614.1 625.2 M251.2 602.1 L258.9 660.0 M312.9 571.2 L305.2 640.7 M343.8 586.6 L340.0 648.4 M370.9 578.9 L378.6 679.3 M255.0 679.3 C261.5 685.7 272.4 707.6 293.6 717.9 C314.9 728.2 367.6 737.2 382.4 741.0 M270.5 656.1 C290.4 659.3 358.6 670.3 390.2 675.4 C421.7 680.6 433.9 682.5 459.7 687.0 C485.4 691.5 530.4 699.9 544.6 702.4 M467.4 625.2 C466.1 631.0 463.5 649.7 459.7 660.0 C455.8 670.3 448.7 674.1 444.2 687.0 C439.7 699.9 436.5 719.2 432.6 737.2 C428.8 755.2 423.0 785.4 421.1 795.1 M409.5 524.8 C415.3 523.5 435.9 515.2 444.2 517.1 C452.6 519.0 459.7 528.7 459.7 536.4 C459.7 544.1 449.4 561.5 444.2 563.4 C439.1 565.4 431.3 550.6 428.8 548.0 M436.5 524.8 L436.5 571.2 M459.7 521.0 C461.6 532.6 464.8 578.2 471.2 590.5 C477.7 602.7 487.3 592.4 498.3 594.3 C509.2 596.3 530.4 600.8 536.9 602.1 M498.3 524.8 L490.5 594.3 M536.9 517.1 C540.1 515.8 544.0 509.4 556.2 509.4 C568.4 509.4 596.7 512.6 610.2 517.1 C623.8 521.6 632.8 533.2 637.3 536.4 M552.3 532.6 C554.3 540.3 560.0 568.6 563.9 578.9 C567.8 589.2 573.6 591.8 575.5 594.3 M587.1 536.4 C591.6 538.3 605.7 541.6 614.1 548.0 C622.5 554.4 630.8 569.2 637.3 575.0 C643.7 580.8 650.1 581.5 652.7 582.7 M498.3 486.2 C506.0 486.2 534.3 482.4 544.6 486.2 C554.9 490.1 557.5 505.5 560.0 509.4 M374.7 447.6 C378.6 449.5 394.7 455.3 397.9 459.2 C401.1 463.1 394.7 468.8 394.0 470.8 M409.5 439.9 L444.2 428.3 M459.7 432.2 C460.9 437.3 459.7 456.6 467.4 463.1 C475.1 469.5 499.6 469.5 506.0 470.8 M274.3 729.5 C285.9 732.0 320.7 741.7 343.8 744.9 C367.0 748.1 401.7 748.1 413.3 748.8 M343.8 756.5 C363.1 759.7 433.9 769.4 459.7 775.8 C485.4 782.2 491.8 791.9 498.3 795.1 M459.7 795.1 L498.3 810.5 M548.5 640.7 C559.4 641.3 596.7 645.2 614.1 644.5 C631.5 643.9 646.3 638.1 652.7 636.8 M556.2 660.0 C558.1 663.2 558.1 674.8 567.8 679.3 C577.4 683.8 600.6 687.0 614.1 687.0 C627.6 687.0 643.1 680.6 648.8 679.3 M590.9 702.4 L633.4 710.2 M536.9 733.3 L614.1 737.2 M575.5 756.5 L633.4 764.2 M285.9 455.3 C295.6 453.4 326.5 447.6 343.8 443.7 C361.2 439.9 382.4 434.1 390.2 432.2 M305.2 486.2 L355.4 497.8 M262.7 524.8 C267.3 528.7 280.1 542.8 289.8 548.0 C299.4 553.1 315.5 554.4 320.7 555.7 M401.7 609.8 L421.1 617.5 M521.4 555.7 L536.9 571.2 M606.4 571.2 L637.3 594.3" fill="none" stroke="#d5dde6" stroke-width="1.5" stroke-linejoin="round" stroke-linecap="round"/>
<path d="M343.8 474.6 C351.6 476.6 379.2 481.7 390.2 486.2 C401.1 490.7 400.5 503.0 409.5 501.7 C418.5 500.4 433.3 481.1 444.2 478.5 C455.2 475.9 466.1 481.1 475.1 486.2 C484.1 491.4 489.3 506.2 498.3 509.4 C507.3 512.6 518.9 497.8 529.2 505.5 C539.5 513.2 552.3 543.5 560.0 555.7 C567.8 567.9 570.3 569.9 575.5 578.9 C580.6 587.9 584.5 600.8 590.9 609.8 C597.4 618.8 610.2 629.1 614.1 632.9 M409.5 501.7 L401.7 532.6 M509.9 517.1 C513.1 520.3 525.3 527.4 529.2 536.4 C533.0 545.4 530.4 562.2 533.0 571.2 C535.6 580.2 542.7 587.2 544.6 590.5 M459.7 694.7 C479.0 697.9 552.3 706.3 575.5 714.0 C598.7 721.7 594.8 736.5 598.7 741.0" fill="none" stroke="#a5d7b8" stroke-width="1.4" stroke-linejoin="round" stroke-linecap="round" stroke-dasharray="5 3.5"/>
<path d="M51.9 540.0 L51.9 548.9 L48.9 559.3 L62.2 574.1 L77.0 594.8 L78.5 609.6 L74.1 628.9 L54.8 646.7 L37.0 664.4 L25.2 677.8 L23.7 688.1 L29.6 700.0 L44.4 700.0 L41.5 692.6 L44.4 679.3 L54.8 663.0 L77.0 647.4 L88.9 648.1 L97.8 658.5 L103.7 658.5 L125.9 643.7 L148.1 643.7 L154.1 640.7 L160.0 642.2 L182.2 642.2 L194.1 648.1 L198.5 642.2 L185.2 636.3 L163.0 631.9 L152.6 634.8 L148.1 641.5 L125.9 642.2 L106.7 654.1 L100.7 654.8 L91.9 643.7 L85.9 634.8 L87.4 628.9 L90.4 603.7 L83.0 584.4 L65.2 569.6 L60.7 557.8 L69.6 540.0 Z" fill="#90d9ed"/>
<path d="M51.3 640.0 L25.7 679.7 L23.3 691.3 L35.0 728.7 L25.7 780.0 L35.0 803.4 L49.0 824.4 L65.3 845.4 L70.0 861.7 L35.0 865.2 L4.7 862.9 L0.0 862.9 L0.0 900.0 L121.4 900.0 L109.7 885.0 L88.7 864.0 L93.3 850.0 L77.0 819.7 L56.0 789.4 L51.3 756.7 L49.0 714.7 L42.0 691.3 L67.7 654.0 L88.7 640.0 Z" fill="#90d9ed"/>
<rect x="0" y="822" width="4.5" height="42" fill="#90d9ed"/>
<path d="M0.0 860.0 L4.6 860.0 L4.6 872.5 L29.6 878.2 L63.9 872.5 L68.4 860.0 L86.7 860.0 L91.2 871.4 L109.5 889.6 L127.7 903.3 L146.0 912.5 L157.4 914.7 L161.9 928.4 L159.6 951.2 L161.9 985.4 L171.0 1015.1 L168.8 1042.4 L159.6 1058.4 L141.4 1078.9 L127.7 1088.1 L114.0 1101.7 L109.5 1114.0 L61.6 1114.0 L54.7 1094.9 L49.0 1082.3 L66.1 1072.1 L79.8 1056.1 L86.7 1067.5 L109.5 1069.8 L127.7 1051.6 L131.1 1037.9 L126.6 1008.2 L123.1 967.2 L136.8 992.3 L140.3 987.7 L126.6 960.3 L127.7 944.4 L136.8 951.2 L127.7 937.5 L104.9 926.1 L86.7 914.7 L73.0 896.5 L57.0 896.5 L31.9 905.6 L2.3 909.0 L0.0 909.0 Z" fill="#90d9ed"/>
<path d="M193.8 978.6 L200.7 974.0 L221.2 974.0 L225.8 1006.0 L237.2 1042.4 L253.1 1072.1 L250.9 1114.0 L218.9 1114.0 L216.6 1088.1 L200.7 1031.0 L192.7 1008.2 Z" fill="#90d9ed"/>
<path d="M358 1070 C362 1050 380 1040 395 1045 C402 1060 404 1090 400 1114 L356 1114 Z" fill="#90d9ed"/>
<path d="M224.6 975.0 C230.5 970.8 247.9 958.2 260.0 950.0 C272.1 941.8 285.3 932.7 297.0 926.0 C308.7 919.3 319.9 915.1 330.0 910.0 C340.1 904.9 353.2 898.0 357.8 895.6" fill="none" stroke="#90d9ed" stroke-width="3"/>
<path d="M77 818.5 L165.7 803.4" fill="none" stroke="#90d9ed" stroke-width="3"/>
<path d="M0.0 507.0 C4.2 510.0 17.7 519.5 25.0 525.0 C32.3 530.5 39.3 536.0 44.0 540.0 C48.7 544.0 51.5 547.5 53.0 549.0" fill="none" stroke="#90d9ed" stroke-width="2.5"/>
<path d="M134.6 222.0 C137.2 224.7 145.8 232.7 150.0 238.0 C154.2 243.3 158.8 249.8 160.0 254.0 C161.2 258.2 160.3 261.0 157.0 263.0 C153.7 265.0 144.8 265.2 140.0 266.0 C135.2 266.8 128.9 264.4 128.0 268.0 C127.1 271.6 134.4 279.1 134.6 287.6 C134.8 296.1 129.4 308.9 129.0 319.0 C128.6 329.1 130.6 339.2 132.4 348.0 C134.2 356.8 137.1 365.0 140.0 372.0 C142.9 379.0 147.0 386.0 150.0 390.0 C153.0 394.0 155.2 395.7 158.0 396.0 C160.8 396.3 163.3 395.0 167.0 392.0 C170.7 389.0 175.3 383.2 180.0 378.0 C184.7 372.8 189.5 367.3 195.0 361.0 C200.5 354.7 208.5 346.7 213.0 340.0 C217.5 333.3 218.3 323.5 222.0 321.0 C225.7 318.5 230.8 323.5 235.0 325.0 C239.2 326.5 241.2 328.3 247.0 330.0 C252.8 331.7 262.5 333.7 270.0 335.0 C277.5 336.3 286.8 335.8 292.0 338.0 C297.2 340.2 298.8 343.5 301.0 348.0 C303.2 352.5 304.3 358.0 305.0 365.0 C305.7 372.0 305.0 380.6 305.0 390.0 C305.0 399.4 303.5 412.2 305.0 421.5 C306.5 430.8 310.3 439.2 313.8 446.0 C317.3 452.8 321.6 455.0 326.0 462.0 C330.4 469.0 338.8 480.2 340.0 488.0 C341.2 495.8 338.2 501.4 333.0 509.0 C327.8 516.6 316.8 532.1 308.6 533.6 C300.4 535.1 292.4 520.3 284.0 518.0 C275.6 515.7 266.2 519.2 258.0 520.0 C249.8 520.8 240.0 525.7 235.0 523.0 C230.0 520.3 230.7 509.5 228.0 504.0 C225.3 498.5 220.5 492.3 219.0 490.0" fill="none" stroke="#90d9ed" stroke-width="5.5" stroke-linejoin="round" stroke-linecap="round"/>
<path d="M219.0 490.0 C216.2 492.2 207.8 499.8 202.0 503.0 C196.2 506.2 188.5 510.7 184.0 509.5 C179.5 508.3 180.7 497.9 175.0 496.0 C169.3 494.1 158.7 497.3 150.0 498.0 C141.3 498.7 133.8 497.7 123.0 500.0 C112.2 502.3 94.3 506.4 85.0 511.7 C75.7 517.0 72.3 525.3 67.0 532.0 C61.7 538.7 55.3 548.7 53.0 552.0" fill="none" stroke="#90d9ed" stroke-width="7" stroke-linejoin="round" stroke-linecap="round"/>
<path d="M213.0 340.0 C214.5 336.8 218.3 323.5 222.0 321.0 C225.7 318.5 230.8 323.5 235.0 325.0 C239.2 326.5 241.2 328.3 247.0 330.0 C252.8 331.7 262.5 333.7 270.0 335.0 C277.5 336.3 286.8 335.8 292.0 338.0 C297.2 340.2 299.5 346.3 301.0 348.0" fill="none" stroke="#90d9ed" stroke-width="8" stroke-linecap="round"/>
<path d="M2.0 148.0 C5.0 148.7 14.5 152.3 20.0 152.0 C25.5 151.7 30.8 148.8 35.0 146.0 C39.2 143.2 43.3 136.8 45.0 135.0" fill="none" stroke="#90d9ed" stroke-width="4"/>
<path d="M55 135 L58 160" fill="none" stroke="#90d9ed" stroke-width="4"/>
<path d="M412.0 338.0 C416.2 339.5 427.6 345.8 437.0 347.0 C446.4 348.2 463.2 345.3 468.5 345.0" fill="none" stroke="#90d9ed" stroke-width="3"/>
<path d="M224.0 971.0 C230.0 967.5 247.3 957.7 260.0 950.0 C272.7 942.3 283.8 934.0 300.0 925.0 C316.2 916.0 347.5 900.8 357.0 896.0" fill="none" stroke="#90d9ed" stroke-width="3"/>
<path d="M100.7 560.7 C102.7 564.7 108.4 577.2 112.6 584.4 C116.8 591.6 120.1 598.5 126.0 603.7 C131.9 608.9 139.4 612.8 148.0 615.6 C156.6 618.4 165.8 618.0 177.8 620.7 C189.8 623.4 209.6 627.1 220.0 632.0 C230.4 636.9 233.3 642.0 240.0 650.0 C246.7 658.0 251.7 670.4 260.0 680.0 C268.3 689.6 275.4 700.7 289.7 707.7 C304.0 714.8 323.4 717.1 345.8 722.3 C368.2 727.5 395.0 732.4 424.0 739.0 C453.0 745.6 490.7 756.0 520.0 762.0 C549.3 768.0 586.7 772.8 600.0 775.0" fill="none" stroke="#d9e1e9" stroke-width="4.5" stroke-linejoin="round" stroke-linecap="round"/>
<path d="M357.0 797.0 C362.5 798.5 378.8 803.0 390.0 806.0 C401.2 809.0 414.7 812.0 424.0 815.0 C433.3 818.0 438.5 822.5 446.0 824.0 C453.5 825.5 460.0 825.8 469.0 824.0 C478.0 822.2 494.8 814.8 500.0 813.0" fill="none" stroke="#d9e1e9" stroke-width="3.5" stroke-linejoin="round" stroke-linecap="round"/>
<path d="M148.0 587.4 C161.9 590.1 187.6 595.5 231.4 603.4 C275.2 611.3 371.2 626.2 411.0 634.8 C450.8 643.4 455.2 649.9 470.0 655.0 C484.8 660.1 488.3 662.6 500.0 665.4 C511.7 668.2 529.7 670.1 540.0 672.0 C550.3 673.9 556.2 676.2 562.0 676.7 C567.8 677.2 569.3 678.5 575.0 675.0 C580.7 671.5 588.8 660.4 596.0 656.0 C603.2 651.6 608.8 652.2 618.5 648.4 C628.2 644.6 642.8 636.5 654.4 633.4 C666.0 630.3 682.4 630.2 688.0 629.6" fill="none" stroke="#d9e1e9" stroke-width="4.5" stroke-linejoin="round" stroke-linecap="round"/>
<path d="M211.0 850.0 C217.5 845.8 236.9 832.7 250.0 825.0 C263.1 817.3 273.0 812.3 289.7 804.0 C306.4 795.7 331.3 783.6 350.0 775.0 C368.7 766.4 385.9 761.9 402.0 752.6 C418.1 743.3 432.1 729.4 446.8 719.0 C461.5 708.6 482.8 694.8 490.0 690.0" fill="none" stroke="#d9e1e9" stroke-width="4" stroke-linejoin="round" stroke-linecap="round"/>
<path d="M260.0 812.7 C252.8 816.2 225.3 828.2 217.0 833.7 C208.7 839.2 211.8 838.9 210.0 845.4 C208.2 851.9 206.7 853.9 206.0 873.0 C205.3 892.1 211.1 942.4 206.0 960.0 C200.9 977.6 179.9 964.9 175.6 978.6 C171.3 992.3 182.7 1026.8 180.0 1042.4 C177.3 1058.0 168.3 1065.2 159.6 1072.0 C150.9 1078.8 135.7 1076.5 127.7 1083.5 C119.7 1090.5 114.4 1108.9 111.7 1114.0" fill="none" stroke="#d9e1e9" stroke-width="5" stroke-linejoin="round" stroke-linecap="round"/>
<path d="M300.0 890.0 C306.7 888.0 328.3 881.0 340.0 878.0 C351.7 875.0 360.8 871.7 370.0 872.0 C379.2 872.3 385.0 873.3 395.0 880.0 C405.0 886.7 416.5 901.8 430.0 912.0 C443.5 922.2 461.0 931.3 476.0 941.0 C491.0 950.7 505.8 959.9 520.0 970.0 C534.2 980.1 549.3 991.5 561.0 1001.5 C572.7 1011.5 581.9 1021.9 590.0 1030.0 C598.1 1038.1 599.7 1047.5 609.7 1050.0 C619.7 1052.5 636.9 1046.5 650.0 1045.0 C663.1 1043.5 678.0 1038.7 688.5 1041.0 C699.0 1043.3 700.8 1053.8 712.7 1059.0 C724.6 1064.2 744.9 1068.5 760.0 1072.0 C775.1 1075.5 782.6 1077.1 803.6 1080.0 C824.6 1082.9 872.3 1087.8 886.0 1089.4" fill="none" stroke="#d9e1e9" stroke-width="4.5" stroke-linejoin="round" stroke-linecap="round"/>
<path d="M528.0 850.0 C528.5 865.2 525.0 917.8 531.0 941.0 C537.0 964.2 558.0 977.9 564.0 989.0 C570.0 1000.1 566.5 1004.5 567.0 1007.6" fill="none" stroke="#d9e1e9" stroke-width="3.5" stroke-linejoin="round" stroke-linecap="round"/>
<path d="M729.6 236.0 C738.2 260.8 761.9 334.1 781.0 385.0 C800.1 435.9 829.2 502.3 844.0 541.5 C858.8 580.7 863.0 600.2 870.0 620.0 C877.0 639.8 883.3 653.3 886.0 660.0" fill="none" stroke="#d9e1e9" stroke-width="4.5" stroke-linejoin="round" stroke-linecap="round"/>
<path d="M698.0 630.0 C705.5 626.1 726.2 617.6 743.0 606.6 C759.8 595.6 784.0 574.1 799.0 564.0 C814.0 553.9 818.3 549.0 832.8 546.0 C847.3 543.0 877.1 546.0 886.0 546.0" fill="none" stroke="#d9e1e9" stroke-width="4.5" stroke-linejoin="round" stroke-linecap="round"/>
<path d="M799.0 421.5 L886.0 391.0" fill="none" stroke="#d9e1e9" stroke-width="4.5" stroke-linejoin="round" stroke-linecap="round"/>
<path d="M448.0 164.0 C457.3 159.9 492.0 144.7 504.0 139.5 C516.0 134.3 517.3 134.1 520.0 133.0" fill="none" stroke="#d9e1e9" stroke-width="4.5" stroke-linejoin="round" stroke-linecap="round"/>
<path d="M835.0 135.0 L886.0 191.0" fill="none" stroke="#d9e1e9" stroke-width="4.5" stroke-linejoin="round" stroke-linecap="round"/>
<path d="M756.5 620.0 C762.1 630.0 777.3 658.3 790.0 680.0 C802.7 701.7 816.8 720.7 832.8 750.0 C848.8 779.3 877.1 838.0 886.0 855.6" fill="none" stroke="#d9e1e9" stroke-width="4" stroke-linejoin="round" stroke-linecap="round"/>
<path d="M783.4 781.5 L832.8 750.0" fill="none" stroke="#d9e1e9" stroke-width="4" stroke-linejoin="round" stroke-linecap="round"/>
<path d="M776.7 660.4 L886.0 678.3" fill="none" stroke="#d9e1e9" stroke-width="4" stroke-linejoin="round" stroke-linecap="round"/>
<path d="M729.6 620.0 C741.3 631.7 773.9 667.6 800.0 690.0 C826.1 712.4 871.7 743.8 886.0 754.6" fill="none" stroke="#cfd5dc" stroke-width="3.5" stroke-linejoin="round" stroke-linecap="round"/>
<path d="M20.0 690.0 C19.3 698.3 17.2 723.3 16.0 740.0 C14.8 756.7 14.3 773.3 13.0 790.0 C11.7 806.7 9.8 825.0 8.0 840.0 C6.2 855.0 3.0 873.3 2.0 880.0" fill="none" stroke="#d9e1e9" stroke-width="4" stroke-linejoin="round" stroke-linecap="round"/>
<path d="M716.0 233.0 C716.6 257.5 717.6 313.8 719.5 380.0 C721.4 446.2 726.1 588.3 727.4 630.0" fill="none" stroke="#cfd5dc" stroke-width="3" stroke-linejoin="round" stroke-linecap="round"/>
<path d="M0.0 406.0 C12.3 409.0 53.8 418.9 74.0 424.0 C94.2 429.1 107.5 435.3 121.0 436.6 C134.5 437.9 143.4 434.4 155.0 432.0 C166.6 429.6 182.9 424.8 190.7 422.0 C198.5 419.2 197.5 422.1 202.0 415.0 C206.5 407.9 213.9 387.2 217.6 379.4 C221.3 371.6 219.9 372.5 224.0 368.0 C228.1 363.5 236.7 354.8 242.0 352.4 C247.3 350.0 249.6 352.3 256.0 353.6 C262.4 354.9 266.5 359.1 280.5 360.0 C294.5 360.9 319.9 359.5 340.0 359.0 C360.1 358.5 384.8 355.1 401.0 357.0 C417.2 358.9 427.2 365.9 437.0 370.6 C446.8 375.3 452.3 378.4 459.5 385.0 C466.7 391.6 475.9 402.2 480.0 410.0 C484.1 417.8 480.7 425.7 484.0 432.0 C487.3 438.3 492.3 445.5 500.0 448.0 C507.7 450.5 520.0 448.8 530.0 447.0 C540.0 445.2 549.2 438.8 560.0 437.0 C570.8 435.2 585.1 438.2 595.0 436.0 C604.9 433.8 609.9 425.7 619.6 423.8 C629.3 421.9 645.1 423.5 653.3 424.9 C661.5 426.3 666.4 430.8 669.0 432.0" fill="none" stroke="#7791b1" stroke-width="7.3" stroke-linejoin="round" stroke-linecap="round"/>
<path d="M0.0 406.0 C12.3 409.0 53.8 418.9 74.0 424.0 C94.2 429.1 107.5 435.3 121.0 436.6 C134.5 437.9 143.4 434.4 155.0 432.0 C166.6 429.6 182.9 424.8 190.7 422.0 C198.5 419.2 197.5 422.1 202.0 415.0 C206.5 407.9 213.9 387.2 217.6 379.4 C221.3 371.6 219.9 372.5 224.0 368.0 C228.1 363.5 236.7 354.8 242.0 352.4 C247.3 350.0 249.6 352.3 256.0 353.6 C262.4 354.9 266.5 359.1 280.5 360.0 C294.5 360.9 319.9 359.5 340.0 359.0 C360.1 358.5 384.8 355.1 401.0 357.0 C417.2 358.9 427.2 365.9 437.0 370.6 C446.8 375.3 452.3 378.4 459.5 385.0 C466.7 391.6 475.9 402.2 480.0 410.0 C484.1 417.8 480.7 425.7 484.0 432.0 C487.3 438.3 492.3 445.5 500.0 448.0 C507.7 450.5 520.0 448.8 530.0 447.0 C540.0 445.2 549.2 438.8 560.0 437.0 C570.8 435.2 585.1 438.2 595.0 436.0 C604.9 433.8 609.9 425.7 619.6 423.8 C629.3 421.9 645.1 423.5 653.3 424.9 C661.5 426.3 666.4 430.8 669.0 432.0" fill="none" stroke="#8ca5c3" stroke-width="5.9" stroke-linejoin="round" stroke-linecap="round"/>
<path d="M545.0 135.0 C548.3 138.3 555.8 150.0 565.0 155.0 C574.2 160.0 587.5 160.0 600.0 165.0 C612.5 170.0 627.0 173.6 640.0 185.0 C653.0 196.4 669.4 221.9 678.0 233.7 C686.6 245.5 686.7 247.0 691.5 256.0 C696.3 265.0 703.8 277.1 707.0 287.6 C710.2 298.1 710.3 308.9 710.5 319.0 C710.7 329.1 710.7 337.0 708.3 348.0 C705.9 359.0 700.7 375.2 696.0 385.0 C691.3 394.8 684.3 400.4 680.2 407.0 C676.1 413.6 673.2 418.2 671.3 424.9 C669.4 431.6 668.3 439.1 669.0 447.3 C669.7 455.5 672.0 464.5 675.7 474.2 C679.5 483.9 687.6 495.9 691.5 505.6 C695.4 515.3 698.4 521.8 699.3 532.6 C700.2 543.5 698.3 558.7 697.0 570.7 C695.7 582.7 692.0 594.5 691.5 604.4 C691.0 614.3 692.6 623.7 693.7 630.0 C694.8 636.3 697.3 636.6 698.2 642.4 C699.1 648.2 701.2 657.4 699.3 664.9 C697.4 672.4 690.9 680.6 687.0 687.3 C683.1 694.0 680.2 698.6 675.7 705.3 C671.2 712.0 666.0 721.0 660.0 727.7 C654.0 734.4 645.0 739.6 639.8 745.6 C634.6 751.6 630.5 758.4 628.6 763.6 C626.7 768.8 627.5 771.8 628.6 777.0 C629.7 782.2 629.4 787.5 635.4 795.0 C641.4 802.5 657.8 813.8 664.5 822.0 C671.2 830.2 671.2 836.4 675.7 844.4 C680.2 852.4 685.3 864.3 691.5 870.0 C697.7 875.7 704.1 875.6 712.7 878.8 C721.3 882.0 733.9 883.1 743.0 889.4 C752.1 895.7 758.7 906.1 767.3 916.7 C775.9 927.3 785.7 941.6 794.5 953.0 C803.3 964.4 811.6 974.2 820.0 985.0 C828.4 995.8 837.5 1010.0 845.0 1018.0 C852.5 1026.0 858.2 1030.0 865.0 1033.0 C871.8 1036.0 882.5 1035.5 886.0 1036.0" fill="none" stroke="#7791b1" stroke-width="7.3" stroke-linejoin="round" stroke-linecap="round"/>
<path d="M545.0 135.0 C548.3 138.3 555.8 150.0 565.0 155.0 C574.2 160.0 587.5 160.0 600.0 165.0 C612.5 170.0 627.0 173.6 640.0 185.0 C653.0 196.4 669.4 221.9 678.0 233.7 C686.6 245.5 686.7 247.0 691.5 256.0 C696.3 265.0 703.8 277.1 707.0 287.6 C710.2 298.1 710.3 308.9 710.5 319.0 C710.7 329.1 710.7 337.0 708.3 348.0 C705.9 359.0 700.7 375.2 696.0 385.0 C691.3 394.8 684.3 400.4 680.2 407.0 C676.1 413.6 673.2 418.2 671.3 424.9 C669.4 431.6 668.3 439.1 669.0 447.3 C669.7 455.5 672.0 464.5 675.7 474.2 C679.5 483.9 687.6 495.9 691.5 505.6 C695.4 515.3 698.4 521.8 699.3 532.6 C700.2 543.5 698.3 558.7 697.0 570.7 C695.7 582.7 692.0 594.5 691.5 604.4 C691.0 614.3 692.6 623.7 693.7 630.0 C694.8 636.3 697.3 636.6 698.2 642.4 C699.1 648.2 701.2 657.4 699.3 664.9 C697.4 672.4 690.9 680.6 687.0 687.3 C683.1 694.0 680.2 698.6 675.7 705.3 C671.2 712.0 666.0 721.0 660.0 727.7 C654.0 734.4 645.0 739.6 639.8 745.6 C634.6 751.6 630.5 758.4 628.6 763.6 C626.7 768.8 627.5 771.8 628.6 777.0 C629.7 782.2 629.4 787.5 635.4 795.0 C641.4 802.5 657.8 813.8 664.5 822.0 C671.2 830.2 671.2 836.4 675.7 844.4 C680.2 852.4 685.3 864.3 691.5 870.0 C697.7 875.7 704.1 875.6 712.7 878.8 C721.3 882.0 733.9 883.1 743.0 889.4 C752.1 895.7 758.7 906.1 767.3 916.7 C775.9 927.3 785.7 941.6 794.5 953.0 C803.3 964.4 811.6 974.2 820.0 985.0 C828.4 995.8 837.5 1010.0 845.0 1018.0 C852.5 1026.0 858.2 1030.0 865.0 1033.0 C871.8 1036.0 882.5 1035.5 886.0 1036.0" fill="none" stroke="#8ca5c3" stroke-width="5.9" stroke-linejoin="round" stroke-linecap="round"/>
<path d="M691.5 251.7 L747.5 233.7" fill="none" stroke="#7791b1" stroke-width="7.3" stroke-linejoin="round" stroke-linecap="round"/>
<path d="M691.5 251.7 L747.5 233.7" fill="none" stroke="#8ca5c3" stroke-width="5.9" stroke-linejoin="round" stroke-linecap="round"/>
<path d="M0.0 485.0 C7.5 489.6 32.7 505.4 45.0 512.9 C57.3 520.4 65.0 523.5 74.0 529.7 C83.0 535.9 89.7 541.7 98.7 549.9 C107.7 558.1 119.8 571.0 128.0 579.0 C136.2 587.0 139.7 591.7 148.0 597.8 C156.3 603.9 164.3 607.7 177.8 615.6 C191.3 623.5 210.3 633.4 229.0 645.0 C247.7 656.6 272.1 673.8 289.7 685.0 C307.3 696.2 319.6 704.8 334.6 712.0 C349.6 719.2 360.8 723.1 379.5 728.0 C398.2 732.9 426.7 736.6 446.8 741.4 C466.9 746.2 481.1 751.9 500.0 757.0 C518.9 762.1 543.3 768.5 560.0 772.0 C576.7 775.5 584.5 779.0 600.0 778.0 C615.5 777.0 638.8 767.8 653.3 765.8 C667.8 763.8 675.8 763.9 687.0 765.8 C698.2 767.7 706.4 771.8 720.6 777.0 C734.8 782.2 757.0 792.7 772.0 797.2 C787.0 801.7 796.6 803.2 810.4 804.0 C824.2 804.8 842.4 802.9 855.0 801.7 C867.6 800.5 880.8 797.8 886.0 797.0" fill="none" stroke="#7791b1" stroke-width="10.5" stroke-linejoin="round" stroke-linecap="round"/>
<path d="M0.0 485.0 C7.5 489.6 32.7 505.4 45.0 512.9 C57.3 520.4 65.0 523.5 74.0 529.7 C83.0 535.9 89.7 541.7 98.7 549.9 C107.7 558.1 119.8 571.0 128.0 579.0 C136.2 587.0 139.7 591.7 148.0 597.8 C156.3 603.9 164.3 607.7 177.8 615.6 C191.3 623.5 210.3 633.4 229.0 645.0 C247.7 656.6 272.1 673.8 289.7 685.0 C307.3 696.2 319.6 704.8 334.6 712.0 C349.6 719.2 360.8 723.1 379.5 728.0 C398.2 732.9 426.7 736.6 446.8 741.4 C466.9 746.2 481.1 751.9 500.0 757.0 C518.9 762.1 543.3 768.5 560.0 772.0 C576.7 775.5 584.5 779.0 600.0 778.0 C615.5 777.0 638.8 767.8 653.3 765.8 C667.8 763.8 675.8 763.9 687.0 765.8 C698.2 767.7 706.4 771.8 720.6 777.0 C734.8 782.2 757.0 792.7 772.0 797.2 C787.0 801.7 796.6 803.2 810.4 804.0 C824.2 804.8 842.4 802.9 855.0 801.7 C867.6 800.5 880.8 797.8 886.0 797.0" fill="none" stroke="#8ca5c3" stroke-width="8.5" stroke-linejoin="round" stroke-linecap="round"/>
<path d="M600.0 778.0 C608.9 776.0 638.8 767.8 653.3 765.8 C667.8 763.8 675.8 763.9 687.0 765.8 C698.2 767.7 706.4 771.8 720.6 777.0 C734.8 782.2 757.0 792.7 772.0 797.2 C787.0 801.7 796.6 803.2 810.4 804.0 C824.2 804.8 842.4 802.9 855.0 801.7 C867.6 800.5 880.8 797.8 886.0 797.0" fill="none" stroke="#7791b1" stroke-width="11.3" stroke-linejoin="round" stroke-linecap="round"/>
<path d="M600.0 778.0 C608.9 776.0 638.8 767.8 653.3 765.8 C667.8 763.8 675.8 763.9 687.0 765.8 C698.2 767.7 706.4 771.8 720.6 777.0 C734.8 782.2 757.0 792.7 772.0 797.2 C787.0 801.7 796.6 803.2 810.4 804.0 C824.2 804.8 842.4 802.9 855.0 801.7 C867.6 800.5 880.8 797.8 886.0 797.0" fill="none" stroke="#8ca5c3" stroke-width="9.1" stroke-linejoin="round" stroke-linecap="round"/>
<path d="M628.6 777.0 C630.8 779.5 637.1 788.8 642.0 792.0 C646.9 795.2 654.0 797.0 658.0 796.0 C662.0 795.0 666.0 789.3 666.0 786.0 C666.0 782.7 659.3 777.7 658.0 776.0" fill="none" stroke="#7791b1" stroke-width="4.9" stroke-linejoin="round" stroke-linecap="round"/>
<path d="M628.6 777.0 C630.8 779.5 637.1 788.8 642.0 792.0 C646.9 795.2 654.0 797.0 658.0 796.0 C662.0 795.0 666.0 789.3 666.0 786.0 C666.0 782.7 659.3 777.7 658.0 776.0" fill="none" stroke="#8ca5c3" stroke-width="3.9" stroke-linejoin="round" stroke-linecap="round"/>
<path d="M660.0 727.7 C658.7 730.6 652.7 739.3 652.0 745.0 C651.3 750.7 652.7 757.8 656.0 762.0 C659.3 766.2 666.3 768.7 672.0 770.0 C677.7 771.3 687.0 770.0 690.0 770.0" fill="none" stroke="#7791b1" stroke-width="5.7" stroke-linejoin="round" stroke-linecap="round"/>
<path d="M660.0 727.7 C658.7 730.6 652.7 739.3 652.0 745.0 C651.3 750.7 652.7 757.8 656.0 762.0 C659.3 766.2 666.3 768.7 672.0 770.0 C677.7 771.3 687.0 770.0 690.0 770.0" fill="none" stroke="#8ca5c3" stroke-width="4.5" stroke-linejoin="round" stroke-linecap="round"/>
<path d="M391.5 532.0 C391.6 533.7 391.4 538.7 392.0 542.0 C392.6 545.3 392.0 547.8 395.0 552.0 C398.0 556.2 404.2 561.7 410.0 567.0 C415.8 572.3 423.7 578.5 430.0 584.0 C436.3 589.5 442.7 595.3 448.0 600.0 C453.3 604.7 455.0 608.7 462.0 612.0 C469.0 615.3 481.2 617.0 490.0 620.0 C498.8 623.0 508.3 627.0 515.0 630.0 C521.7 633.0 527.5 636.7 530.0 638.0" fill="none" stroke="#90d9ed" stroke-width="3"/>
<ellipse cx="391" cy="537" rx="3.5" ry="4" fill="#90d9ed"/>
<path d="M505 800 L525 783 L545 790 L540 815 L528 845 L508 845 Z" fill="#f9e8d2" opacity="0.6"/>
<path d="M756 680 L778 670 L800 690 L790 715 L770 710 Z" fill="#f5efdc"/>
<path d="M861 990 L872 975 L886 972 L886 1032 L872 1030 L861 1012 Z" fill="#9ad6b8" opacity="0.6"/>
<path d="M790.0 310.0 C792.5 313.3 800.0 325.0 805.0 330.0 C810.0 335.0 814.2 340.0 820.0 340.0 C825.8 340.0 835.3 333.7 840.0 330.0 C844.7 326.3 848.0 322.2 848.0 318.0 C848.0 313.8 841.3 307.2 840.0 305.0" fill="none" stroke="#9dd6b3" stroke-width="1.5"/>
<rect x="121" y="430" width="33.5" height="15.5" fill="#5f9e44" rx="1"/>
<text x="137.8" y="442.5" font-family="Liberation Sans" font-weight="bold" font-size="13" fill="#fff" text-anchor="middle" textLength="26.1" lengthAdjust="spacingAndGlyphs">A38</text>
<rect x="45" y="516" width="29.0" height="16.0" fill="#5f9e44" rx="1"/>
<text x="59.5" y="529.0" font-family="Liberation Sans" font-weight="bold" font-size="13" fill="#fff" text-anchor="middle" textLength="22.6" lengthAdjust="spacingAndGlyphs">M2</text>
<rect x="696.6" y="337" width="25.4" height="15.6" fill="#5f9e44" rx="1"/>
<text x="709.3" y="349.6" font-family="Liberation Sans" font-weight="bold" font-size="13" fill="#fff" text-anchor="middle" textLength="19.8" lengthAdjust="spacingAndGlyphs">A1</text>
<rect x="402" y="352.6" width="33.5" height="16.9" fill="#5f9e44" rx="1"/>
<text x="418.8" y="366.5" font-family="Liberation Sans" font-weight="bold" font-size="13" fill="#fff" text-anchor="middle" textLength="26.1" lengthAdjust="spacingAndGlyphs">A38</text>
<rect x="561" y="428.5" width="33.5" height="16.5" fill="#5f9e44" rx="1"/>
<text x="577.8" y="442.0" font-family="Liberation Sans" font-weight="bold" font-size="13" fill="#fff" text-anchor="middle" textLength="26.1" lengthAdjust="spacingAndGlyphs">A38</text>
<rect x="663.4" y="699.7" width="25.8" height="15.7" fill="#5f9e44" rx="1"/>
<text x="676.3" y="712.4" font-family="Liberation Sans" font-weight="bold" font-size="13" fill="#fff" text-anchor="middle" textLength="20.1" lengthAdjust="spacingAndGlyphs">A1</text>
<rect x="772.2" y="793.9" width="29.2" height="15.7" fill="#5f9e44" rx="1"/>
<text x="786.8" y="806.6" font-family="Liberation Sans" font-weight="bold" font-size="13" fill="#fff" text-anchor="middle" textLength="22.8" lengthAdjust="spacingAndGlyphs">M2</text>
<rect x="472" y="750" width="28.0" height="15.0" fill="#5f9e44" rx="1"/>
<text x="486.0" y="762.0" font-family="Liberation Sans" font-weight="bold" font-size="13" fill="#fff" text-anchor="middle" textLength="21.8" lengthAdjust="spacingAndGlyphs">M2</text>
<rect x="596.6" y="156" width="26" height="4" fill="#5f9e44"/>
<text x="254" y="354.2" font-family="Liberation Sans" font-weight="normal" font-size="23" text-anchor="start" textLength="118.7" lengthAdjust="spacingAndGlyphs" fill="#fff" stroke="#fff" stroke-width="3.5" stroke-linejoin="round">Chatswood</text>
<text x="254" y="354.2" font-family="Liberation Sans" font-weight="normal" font-size="23" text-anchor="start" textLength="118.7" lengthAdjust="spacingAndGlyphs" fill="#2e3236" stroke="#2e3236" stroke-width="0.85">Chatswood</text>
<text x="288" y="378.5" font-family="Liberation Sans" font-weight="normal" font-size="23" text-anchor="start" textLength="53" lengthAdjust="spacingAndGlyphs" fill="#fff" stroke="#fff" stroke-width="3.5" stroke-linejoin="round">West</text>
<text x="288" y="378.5" font-family="Liberation Sans" font-weight="normal" font-size="23" text-anchor="start" textLength="53" lengthAdjust="spacingAndGlyphs" fill="#2e3236" stroke="#2e3236" stroke-width="0.85">West</text>
<text x="611" y="440.6" font-family="Liberation Sans" font-weight="normal" font-size="23" text-anchor="start" textLength="118.6" lengthAdjust="spacingAndGlyphs" fill="#fff" stroke="#fff" stroke-width="3.5" stroke-linejoin="round">Chatswood</text>
<text x="611" y="440.6" font-family="Liberation Sans" font-weight="normal" font-size="23" text-anchor="start" textLength="118.6" lengthAdjust="spacingAndGlyphs" fill="#2e3236" stroke="#2e3236" stroke-width="0.85">Chatswood</text>
<text x="753" y="719.8" font-family="Liberation Sans" font-weight="normal" font-size="23" text-anchor="start" textLength="100" lengthAdjust="spacingAndGlyphs" fill="#fff" stroke="#fff" stroke-width="3.5" stroke-linejoin="round">Artarmon</text>
<text x="753" y="719.8" font-family="Liberation Sans" font-weight="normal" font-size="23" text-anchor="start" textLength="100" lengthAdjust="spacingAndGlyphs" fill="#2e3236" stroke="#2e3236" stroke-width="0.85">Artarmon</text>
<text x="412" y="645" font-family="Liberation Sans" font-weight="normal" font-size="23" text-anchor="start" textLength="111" lengthAdjust="spacingAndGlyphs" fill="#fff" stroke="#fff" stroke-width="3.5" stroke-linejoin="round">Lane Cove</text>
<text x="412" y="645" font-family="Liberation Sans" font-weight="normal" font-size="23" text-anchor="start" textLength="111" lengthAdjust="spacingAndGlyphs" fill="#2e3236" stroke="#2e3236" stroke-width="0.85">Lane Cove</text>
<text x="440" y="668.5" font-family="Liberation Sans" font-weight="normal" font-size="23" text-anchor="start" textLength="57" lengthAdjust="spacingAndGlyphs" fill="#fff" stroke="#fff" stroke-width="3.5" stroke-linejoin="round">North</text>
<text x="440" y="668.5" font-family="Liberation Sans" font-weight="normal" font-size="23" text-anchor="start" textLength="57" lengthAdjust="spacingAndGlyphs" fill="#2e3236" stroke="#2e3236" stroke-width="0.85">North</text>
<text x="173" y="754" font-family="Liberation Sans" font-weight="normal" font-size="23" text-anchor="start" textLength="110.6" lengthAdjust="spacingAndGlyphs" fill="#fff" stroke="#fff" stroke-width="3.5" stroke-linejoin="round">Lane Cove</text>
<text x="173" y="754" font-family="Liberation Sans" font-weight="normal" font-size="23" text-anchor="start" textLength="110.6" lengthAdjust="spacingAndGlyphs" fill="#2e3236" stroke="#2e3236" stroke-width="0.85">Lane Cove</text>
<text x="201.7" y="777.6" font-family="Liberation Sans" font-weight="normal" font-size="23" text-anchor="start" textLength="53.3" lengthAdjust="spacingAndGlyphs" fill="#fff" stroke="#fff" stroke-width="3.5" stroke-linejoin="round">West</text>
<text x="201.7" y="777.6" font-family="Liberation Sans" font-weight="normal" font-size="23" text-anchor="start" textLength="53.3" lengthAdjust="spacingAndGlyphs" fill="#2e3236" stroke="#2e3236" stroke-width="0.85">West</text>
<text x="471.8" y="831.5" font-family="Liberation Sans" font-weight="normal" font-size="23" text-anchor="start" textLength="112.2" lengthAdjust="spacingAndGlyphs" fill="#fff" stroke="#fff" stroke-width="3.5" stroke-linejoin="round">Lane Cove</text>
<text x="471.8" y="831.5" font-family="Liberation Sans" font-weight="normal" font-size="23" text-anchor="start" textLength="112.2" lengthAdjust="spacingAndGlyphs" fill="#2e3236" stroke="#2e3236" stroke-width="0.85">Lane Cove</text>
<text x="9.8" y="820.9" font-family="Liberation Sans" font-weight="normal" font-size="23" text-anchor="start" textLength="51.3" lengthAdjust="spacingAndGlyphs" fill="#fff" stroke="#fff" stroke-width="3.5" stroke-linejoin="round">Ryde</text>
<text x="9.8" y="820.9" font-family="Liberation Sans" font-weight="normal" font-size="23" text-anchor="start" textLength="51.3" lengthAdjust="spacingAndGlyphs" fill="#2e3236" stroke="#2e3236" stroke-width="0.85">Ryde</text>
<text x="316" y="1030" font-family="Liberation Sans" font-weight="normal" font-size="23" text-anchor="start" textLength="100.8" lengthAdjust="spacingAndGlyphs" fill="#fff" stroke="#fff" stroke-width="3.5" stroke-linejoin="round">Riverview</text>
<text x="316" y="1030" font-family="Liberation Sans" font-weight="normal" font-size="23" text-anchor="start" textLength="100.8" lengthAdjust="spacingAndGlyphs" fill="#2e3236" stroke="#2e3236" stroke-width="0.85">Riverview</text>
<text x="115.2" y="1100.6" font-family="Liberation Sans" font-weight="normal" font-size="23" text-anchor="start" textLength="124.3" lengthAdjust="spacingAndGlyphs" fill="#fff" stroke="#fff" stroke-width="3.5" stroke-linejoin="round">Linley Point</text>
<text x="115.2" y="1100.6" font-family="Liberation Sans" font-weight="normal" font-size="23" text-anchor="start" textLength="124.3" lengthAdjust="spacingAndGlyphs" fill="#2e3236" stroke="#2e3236" stroke-width="0.85">Linley Point</text>
<text x="819" y="192.5" font-family="Liberation Sans" font-weight="normal" font-size="23" text-anchor="start" textLength="98" lengthAdjust="spacingAndGlyphs" fill="#fff" stroke="#fff" stroke-width="3.5" stroke-linejoin="round">Roseville</text>
<text x="819" y="192.5" font-family="Liberation Sans" font-weight="normal" font-size="23" text-anchor="start" textLength="98" lengthAdjust="spacingAndGlyphs" fill="#2e3236" stroke="#2e3236" stroke-width="0.85">Roseville</text>
<text x="85" y="136" font-family="Liberation Sans" font-weight="bold" font-size="15" text-anchor="start" textLength="157" lengthAdjust="spacingAndGlyphs" fill="#fff" stroke="#fff" stroke-width="3.5" stroke-linejoin="round">WEST LINDFIELD</text>
<text x="85" y="136" font-family="Liberation Sans" font-weight="bold" font-size="15" text-anchor="start" textLength="157" lengthAdjust="spacingAndGlyphs" fill="#444">WEST LINDFIELD</text>
<text x="262" y="231" transform="rotate(68 262 231)" font-family="Liberation Sans" font-weight="normal" font-size="16" text-anchor="start" textLength="97" lengthAdjust="spacingAndGlyphs" fill="#fff" stroke="#fff" stroke-width="3" stroke-linejoin="round">Lady Game Dr</text>
<text x="262" y="231" transform="rotate(68 262 231)" font-family="Liberation Sans" font-weight="normal" font-size="16" text-anchor="start" textLength="97" lengthAdjust="spacingAndGlyphs" fill="#3c4350">Lady Game Dr</text>
<text x="730.5" y="252.5" transform="rotate(64 730.5 252.5)" font-family="Liberation Sans" font-weight="normal" font-size="16" text-anchor="start" textLength="67" lengthAdjust="spacingAndGlyphs" fill="#fff" stroke="#fff" stroke-width="3" stroke-linejoin="round">Archer St</text>
<text x="730.5" y="252.5" transform="rotate(64 730.5 252.5)" font-family="Liberation Sans" font-weight="normal" font-size="16" text-anchor="start" textLength="67" lengthAdjust="spacingAndGlyphs" fill="#3c4350">Archer St</text>
<text x="718" y="622" transform="rotate(-35 718 622)" font-family="Liberation Sans" font-weight="normal" font-size="16" text-anchor="start" textLength="90" lengthAdjust="spacingAndGlyphs" fill="#fff" stroke="#fff" stroke-width="3" stroke-linejoin="round">Mowbray Rd</text>
<text x="718" y="622" transform="rotate(-35 718 622)" font-family="Liberation Sans" font-weight="normal" font-size="16" text-anchor="start" textLength="90" lengthAdjust="spacingAndGlyphs" fill="#3c4350">Mowbray Rd</text>
<text x="289" y="808" transform="rotate(-26.3 289 808)" font-family="Liberation Sans" font-weight="normal" font-size="16" text-anchor="start" textLength="109" lengthAdjust="spacingAndGlyphs" fill="#fff" stroke="#fff" stroke-width="3" stroke-linejoin="round">Centennial Ave</text>
<text x="289" y="808" transform="rotate(-26.3 289 808)" font-family="Liberation Sans" font-weight="normal" font-size="16" text-anchor="start" textLength="109" lengthAdjust="spacingAndGlyphs" fill="#3c4350">Centennial Ave</text>
<text x="274" y="837" transform="rotate(-19.2 274 837)" font-family="Liberation Sans" font-weight="normal" font-size="16" text-anchor="start" textLength="95" lengthAdjust="spacingAndGlyphs" fill="#fff" stroke="#fff" stroke-width="3" stroke-linejoin="round">Burns Bay Rd</text>
<text x="274" y="837" transform="rotate(-19.2 274 837)" font-family="Liberation Sans" font-weight="normal" font-size="16" text-anchor="start" textLength="95" lengthAdjust="spacingAndGlyphs" fill="#3c4350">Burns Bay Rd</text>
<text x="221" y="877" transform="rotate(10.8 221 877)" font-family="Liberation Sans" font-weight="normal" font-size="16" text-anchor="start" textLength="81" lengthAdjust="spacingAndGlyphs" fill="#fff" stroke="#fff" stroke-width="3" stroke-linejoin="round">Penrose St</text>
<text x="221" y="877" transform="rotate(10.8 221 877)" font-family="Liberation Sans" font-weight="normal" font-size="16" text-anchor="start" textLength="81" lengthAdjust="spacingAndGlyphs" fill="#3c4350">Penrose St</text>
<text x="183" y="973" transform="rotate(-70.3 183 973)" font-family="Liberation Sans" font-weight="normal" font-size="16" text-anchor="start" textLength="94" lengthAdjust="spacingAndGlyphs" fill="#fff" stroke="#fff" stroke-width="3" stroke-linejoin="round">Burns Bay Rd</text>
<text x="183" y="973" transform="rotate(-70.3 183 973)" font-family="Liberation Sans" font-weight="normal" font-size="16" text-anchor="start" textLength="94" lengthAdjust="spacingAndGlyphs" fill="#3c4350">Burns Bay Rd</text>
<text x="152" y="1062" transform="rotate(-83 152 1062)" font-family="Liberation Sans" font-weight="normal" font-size="17" text-anchor="start" textLength="123" lengthAdjust="spacingAndGlyphs" fill="#2b8794">Lane Cove River</text>
<text x="405" y="903" transform="rotate(29 405 903)" font-family="Liberation Sans" font-weight="normal" font-size="16" text-anchor="start" textLength="82" lengthAdjust="spacingAndGlyphs" fill="#fff" stroke="#fff" stroke-width="3" stroke-linejoin="round">River Rd W</text>
<text x="405" y="903" transform="rotate(29 405 903)" font-family="Liberation Sans" font-weight="normal" font-size="16" text-anchor="start" textLength="82" lengthAdjust="spacingAndGlyphs" fill="#3c4350">River Rd W</text>
<text x="746" y="900" font-family="Liberation Sans" font-weight="bold" font-size="16" text-anchor="start" textLength="54" lengthAdjust="spacingAndGlyphs" fill="#fff" stroke="#fff" stroke-width="3" stroke-linejoin="round">GORE</text>
<text x="746" y="900" font-family="Liberation Sans" font-weight="bold" font-size="16" text-anchor="start" textLength="54" lengthAdjust="spacingAndGlyphs" fill="#555">GORE</text>
<text x="766" y="921" transform="rotate(56 766 921)" font-family="Liberation Sans" font-weight="normal" font-size="16" text-anchor="start" textLength="40" lengthAdjust="spacingAndGlyphs" fill="#fff" stroke="#fff" stroke-width="3" stroke-linejoin="round">Pacific</text>
<text x="766" y="921" transform="rotate(56 766 921)" font-family="Liberation Sans" font-weight="normal" font-size="16" text-anchor="start" textLength="40" lengthAdjust="spacingAndGlyphs" fill="#3c4350">Pacific</text>
<text x="796" y="1091" font-family="Liberation Sans" font-weight="normal" font-style="italic" font-size="17" text-anchor="start" textLength="59" lengthAdjust="spacingAndGlyphs" fill="#fff" stroke="#fff" stroke-width="3" stroke-linejoin="round">River Rd</text>
<text x="796" y="1091" font-family="Liberation Sans" font-weight="normal" font-style="italic" font-size="17" text-anchor="start" textLength="59" lengthAdjust="spacingAndGlyphs" fill="#525a68">River Rd</text>
<text x="3.5" y="733" transform="rotate(75 3.5 733)" font-family="Liberation Sans" font-weight="normal" font-size="16" text-anchor="start" textLength="40" lengthAdjust="spacingAndGlyphs" fill="#fff" stroke="#fff" stroke-width="3" stroke-linejoin="round">er Rd</text>
<text x="3.5" y="733" transform="rotate(75 3.5 733)" font-family="Liberation Sans" font-weight="normal" font-size="16" text-anchor="start" textLength="40" lengthAdjust="spacingAndGlyphs" fill="#3c4350">er Rd</text>
<circle cx="710.9" cy="457.8" r="9.3" fill="#fff"/><circle cx="710.9" cy="457.8" r="8.4" fill="#ee8a12"/>
<circle cx="730.6" cy="457.8" r="9.3" fill="#fff"/><circle cx="730.6" cy="457.8" r="8.4" fill="#17868a"/>
<text x="710.9" y="462.6" font-family="Liberation Sans" font-weight="bold" font-size="13" fill="#fff" text-anchor="middle">T</text>
<text x="730.6" y="462.6" font-family="Liberation Sans" font-weight="bold" font-size="13" fill="#fff" text-anchor="middle">M</text>
<text x="600" y="1116" font-family="Liberation Sans" font-weight="normal" font-size="23" text-anchor="start" textLength="118" lengthAdjust="spacingAndGlyphs" fill="#fff" stroke="#fff" stroke-width="3.5" stroke-linejoin="round">Northwood</text>
<text x="600" y="1116" font-family="Liberation Sans" font-weight="normal" font-size="23" text-anchor="start" textLength="118" lengthAdjust="spacingAndGlyphs" fill="#2e3236" stroke="#2e3236" stroke-width="0.85">Northwood</text>
<path d="M442.5 409.8 L408.9 412.4 L376.2 420.3 L345.1 433.2 L316.4 450.8 L290.8 472.6 L269.0 498.2 L251.4 526.9 L238.5 558.0 L230.6 590.7 L228.0 624.3 L230.6 657.9 L238.5 690.6 L251.4 721.7 L269.0 750.4 L290.8 776.0 L316.4 797.8 L345.1 815.4 L376.2 828.3 L408.9 836.2 L442.5 838.8 L476.1 836.2 L508.8 828.3 L539.9 815.4 L568.6 797.8 L594.2 776.0 L616.0 750.4 L633.6 721.7 L646.5 690.6 L654.4 657.9 L657.0 624.3 L654.4 590.7 L646.5 558.0 L633.6 526.9 L616.0 498.2 L594.2 472.6 L568.6 450.8 L539.9 433.2 L508.8 420.3 L476.1 412.4 Z" fill="rgba(255,0,0,0.35)" stroke="#ff1f1f" stroke-width="2.6" stroke-linejoin="round"/>
<text x="417.3" y="631.1" font-family="Liberation Sans" font-weight="bold" font-size="23" fill="#0a8a0a" textLength="50.5" lengthAdjust="spacingAndGlyphs">8699</text>
<rect x="497" y="1092" width="389" height="22" fill="rgba(245,245,245,0.7)"/>
<text x="504.5" y="1107.6" font-family="Liberation Sans" font-size="15" fill="#222" textLength="129" lengthAdjust="spacingAndGlyphs">Keyboard shortcuts</text>
<text x="653" y="1107.6" font-family="Liberation Sans" font-size="15" fill="#222" textLength="163" lengthAdjust="spacingAndGlyphs">Map data ©2025 Google</text>
<text x="834" y="1107.6" font-family="Liberation Sans" font-size="15" fill="#222" textLength="41.5" lengthAdjust="spacingAndGlyphs">Terms</text>
<text x="15" y="1102" font-family="Liberation Sans" font-weight="bold" font-size="25" fill="#fff" stroke="#9a9a9a" stroke-width="1.3" textLength="84" lengthAdjust="spacingAndGlyphs">Google</text>
</svg>
</div>
<div class="abs" style="left:886px;top:135px;width:1px;height:979px;background:#c4c4c7"></div>
<div class="abs" style="left:0;top:135px;width:2px;height:979px;background:#dcdfe4"></div>

<!-- map controls -->
<div class="ctl" style="left:24px;top:159px;width:423px;height:65.5px"></div>
<div class="abs" style="left:30.5px;top:165.5px;width:342.5px;height:53px;background:#f7f8fa;border:1px solid #e3e6ea;border-radius:8px"></div>
<div class="abs" style="left:380px;top:159px;width:1.5px;height:65.5px;background:#e6e8ec"></div>
<svg class="abs" style="left:0;top:0" width="1" height="1" fill="none" stroke="#6b7280" stroke-width="2" stroke-linecap="round" stroke-linejoin="round"><path d="M409.5 185l8.5 7.2l-8.5 7.3"/></svg>

<div class="ctl" style="left:555px;top:159px;width:75px;height:77.6px"></div>
<svg class="abs" style="left:575.5px;top:179.1px" width="34.2" height="34.2" viewBox="0 0 24 24" fill="none" stroke="#333" stroke-width="1.5" stroke-linecap="round" stroke-linejoin="round"><path d="M16 4l4 0l0 4"/><path d="M14 10l6 -6"/><path d="M8 20l-4 0l0 -4"/><path d="M4 20l6 -6"/><path d="M16 20l4 0l0 -4"/><path d="M14 14l6 6"/><path d="M8 4l-4 0l0 4"/><path d="M4 4l6 6"/></svg>

<div class="ctl" style="left:648px;top:159px;width:213px;height:74.6px"></div>
<div class="abs" style="left:660.2px;top:170.6px;width:50.7px;height:51.2px;background:#fd7f17;border-radius:12px"></div>
<svg class="abs" style="left:0;top:0" width="1" height="1" fill="none" stroke="#fff" stroke-width="2" stroke-linecap="round" stroke-linejoin="round"><path d="M681.9 186.5v18M689.8 200v7.7M681.9 184.7l-9.2 3.9v19.1l9.2 -3.3l7.9 3.3l8.5 -4.6v-3.3"/><path d="M693.7 197.8c-2.5 -2.8 -5.9 -5.9 -5.9 -9.8a5.9 5.9 0 0 1 11.8 0c0 3.9 -3.4 7 -5.9 9.8z"/><path d="M693.7 188h.01" stroke-width="2.4"/></svg>
<svg class="abs" style="left:737.7px;top:179.7px" width="33.6" height="33.6" viewBox="0 0 24 24" fill="none" stroke="#333" stroke-width="1.5" stroke-linecap="round" stroke-linejoin="round"><path d="M3.707 6.293l2.586 -2.586a1 1 0 0 1 1.414 0l5.586 5.586a1 1 0 0 1 0 1.414l-2.586 2.586a1 1 0 0 1 -1.414 0l-5.586 -5.586a1 1 0 0 1 0 -1.414z"/><path d="M6 10l-3 3l3 3l3 -3"/><path d="M10 6l3 -3l3 3l-3 3"/><path d="M12 12l1.5 1.5"/><path d="M14.5 17a2.5 2.5 0 0 0 2.5 -2.5"/><path d="M15 21a6 6 0 0 0 6 -6"/></svg>
<svg class="abs" style="left:806.7px;top:179.6px" width="33.6" height="33.6" viewBox="0 0 24 24" fill="none" stroke="#333" stroke-width="1.5" stroke-linecap="round" stroke-linejoin="round"><path d="M3 20h18l-6.921 -14.612a2.3 2.3 0 0 0 -4.158 0l-6.921 14.612z"/><path d="M7.5 11l2 2.5l2.5 -2.5l2 3l2.5 -2"/></svg>

<div class="ctl" style="left:795px;top:882.7px;width:65.6px;height:182.3px"></div>
<svg class="abs" style="left:811.7px;top:899.3px" width="32.9" height="32.9" viewBox="0 0 24 24" fill="none" stroke="#333" stroke-width="1.5" stroke-linecap="round" stroke-linejoin="round"><path d="M12 12m-.5 0a.5 .5 0 1 0 1 0a.5 .5 0 1 0 -1 0"/><path d="M12 12m-9 0a9 9 0 1 0 18 0a9 9 0 1 0 -18 0"/></svg>
<svg class="abs" style="left:811.7px;top:957.7px" width="32.9" height="32.9" viewBox="0 0 24 24" fill="none" stroke="#333" stroke-width="1.5" stroke-linecap="round" stroke-linejoin="round"><path d="M10 10m-7 0a7 7 0 1 0 14 0a7 7 0 1 0 -14 0"/><path d="M7 10l6 0"/><path d="M10 7l0 6"/><path d="M21 21l-6 -6"/></svg>
<svg class="abs" style="left:811.7px;top:1016.2px" width="32.9" height="32.9" viewBox="0 0 24 24" fill="none" stroke="#333" stroke-width="1.5" stroke-linecap="round" stroke-linejoin="round"><path d="M10 10m-7 0a7 7 0 1 0 14 0a7 7 0 1 0 -14 0"/><path d="M7 10l6 0"/><path d="M21 21l-6 -6"/></svg>

<div id="panel">
</div>
<!-- panel contents (page coords) -->
<div class="abs" style="left:1311.5px;top:164.7px;width:41.5px;height:42px;background:#fff2e8;border-radius:7px"></div>
<svg class="abs" style="left:1316.9px;top:170.7px" width="30" height="30" viewBox="0 0 24 24" fill="none" stroke="#ff7a12" stroke-width="1.6" stroke-linecap="round" stroke-linejoin="round"><path d="M14 3v4a1 1 0 0 0 1 1h4"/><path d="M17 21h-10a2 2 0 0 1 -2 -2v-14a2 2 0 0 1 2 -2h7l5 5v11a2 2 0 0 1 -2 2z"/><path d="M9 17l0 -5"/><path d="M12 17l0 -1"/><path d="M15 17l0 -3"/></svg>
<div class="abs" style="left:1368px;top:158.8px;width:93px;height:53.8px;background:#ff7f17;border-radius:8px"></div>
<svg class="abs" style="left:1396px;top:167.3px" width="37" height="37" viewBox="0 0 24 24" fill="none" stroke="#fff" stroke-width="1.5" stroke-linecap="round" stroke-linejoin="round"><path d="M4 17v2a2 2 0 0 0 2 2h12a2 2 0 0 0 2 -2v-2"/><path d="M7 11l5 5l5 -5"/><path d="M12 4l0 12"/></svg>
<div class="abs" style="left:887px;top:260.5px;width:598px;height:1.5px;background:#e8eaee"></div>
<div class="abs" style="left:1470px;top:286px;width:15px;height:43.5px;background:#8a8a8a"></div>
<div class="abs" style="left:1470px;top:329.5px;width:15px;height:785px;background:#f0f0f0"></div>

<div class="card" style="left:910.5px;top:311px;width:257px;height:157.5px"></div>
<div class="card" style="left:1191.4px;top:311px;width:255.1px;height:157.5px"></div>
<div class="card" style="left:910.5px;top:492.5px;width:257px;height:157px"></div>
<div class="card" style="left:1191.4px;top:492.5px;width:255.1px;height:157px"></div>
<div class="ibox" style="left:941.3px;top:364.7px;width:50.6px;height:51px"></div>
<div class="ibox" style="left:1221.9px;top:364.7px;width:50.6px;height:51px"></div>
<div class="ibox" style="left:941.3px;top:546px;width:50.6px;height:50.7px"></div>
<div class="ibox" style="left:1221.9px;top:546px;width:50.6px;height:50.7px"></div>
<svg class="abs" style="left:950px;top:373.5px" width="32.7" height="32.7" viewBox="0 0 24 24" fill="none" stroke="#ff7a12" stroke-width="1.6" stroke-linecap="round" stroke-linejoin="round"><path d="M10 21v-6.5a3.5 3.5 0 0 0 -7 0v6.5h18v-6a4 4 0 0 0 -4 -4h-10.5"/><path d="M12 11v-8h4l2 2l-2 2h-4"/><path d="M6 15h1"/></svg>
<svg class="abs" style="left:1230.4px;top:373.5px" width="33" height="33" viewBox="0 0 24 24" fill="none" stroke="#ff7a12" stroke-width="1.6" stroke-linecap="round" stroke-linejoin="round"><path d="M3 21l18 0"/><path d="M3 7v1a3 3 0 0 0 6 0v-1m0 1a3 3 0 0 0 6 0v-1m0 1a3 3 0 0 0 6 0v-1h-18l2 -4h14l2 4"/><path d="M5 21l0 -10.15"/><path d="M19 21l0 -10.15"/><path d="M9 21v-4a2 2 0 0 1 2 -2h2a2 2 0 0 1 2 2v4"/></svg>
<svg class="abs" style="left:950.1px;top:555px" width="33" height="33" viewBox="0 0 24 24" fill="none" stroke="#ff7a12" stroke-width="1.6" stroke-linecap="round" stroke-linejoin="round"><path d="M4 4m0 2a2 2 0 0 1 2 -2h12a2 2 0 0 1 2 2v12a2 2 0 0 1 -2 2h-12a2 2 0 0 1 -2 -2z"/><path d="M4 13h3l3 3h4l3 -3h3"/></svg>
<svg class="abs" style="left:1230.4px;top:554.8px" width="33.6" height="33.6" viewBox="0 0 24 24" fill="none" stroke="#ff7a12" stroke-width="1.6" stroke-linecap="round" stroke-linejoin="round"><path d="M9 7m-4 0a4 4 0 1 0 8 0a4 4 0 1 0 -8 0"/><path d="M3 21v-2a4 4 0 0 1 4 -4h4a4 4 0 0 1 4 4v2"/><path d="M16 3.13a4 4 0 0 1 0 7.75"/><path d="M21 21v-2a4 4 0 0 0 -3 -3.85"/></svg>

<div class="abs" style="left:911.7px;top:775.5px;width:534px;height:400px;border:1.5px solid #e8eaee;border-radius:12px"></div>
<svg class="abs" style="left:0;top:0" width="1" height="1" fill="none" stroke="#6b7280" stroke-width="1.8" stroke-linecap="round" stroke-linejoin="round"><path d="M1383 837l6.7 -7.5l6.7 7.5"/></svg>
<div class="pill" style="left:1315px;top:889.6px;width:90.5px"></div>
<svg class="abs" style="left:1327.0px;top:894.6px" width="10" height="16" viewBox="0 0 10 16"><path d="M5 13.5V4M2.3 6.7L5 4l2.7 2.7" fill="none" stroke="#2e8b3d" stroke-width="1.5" stroke-linecap="round" stroke-linejoin="round"/></svg>
<div class="t" style="left:1347.8px;top:895.5px;font-size:16px;font-weight:bold;color:#2e8b3d;transform:scaleX(0.8600);">38.09%</div>
<div class="pill" style="left:1315px;top:940.4px;width:90.5px"></div>
<svg class="abs" style="left:1327.0px;top:945.4px" width="10" height="16" viewBox="0 0 10 16"><path d="M5 13.5V4M2.3 6.7L5 4l2.7 2.7" fill="none" stroke="#2e8b3d" stroke-width="1.5" stroke-linecap="round" stroke-linejoin="round"/></svg>
<div class="t" style="left:1347.8px;top:946.3px;font-size:16px;font-weight:bold;color:#2e8b3d;transform:scaleX(0.8600);">21.33%</div>
<div class="pill" style="left:1315px;top:993.2px;width:90.5px"></div>
<svg class="abs" style="left:1327.0px;top:998.2px" width="10" height="16" viewBox="0 0 10 16"><path d="M5 13.5V4M2.3 6.7L5 4l2.7 2.7" fill="none" stroke="#2e8b3d" stroke-width="1.5" stroke-linecap="round" stroke-linejoin="round"/></svg>
<div class="t" style="left:1347.8px;top:999.1px;font-size:16px;font-weight:bold;color:#2e8b3d;transform:scaleX(0.8600);">12.12%</div>
<div class="pill" style="left:1315px;top:1044.4px;width:90.5px"></div>
<svg class="abs" style="left:1327.0px;top:1049.4px" width="10" height="16" viewBox="0 0 10 16"><path d="M5 13.5V4M2.3 6.7L5 4l2.7 2.7" fill="none" stroke="#2e8b3d" stroke-width="1.5" stroke-linecap="round" stroke-linejoin="round"/></svg>
<div class="t" style="left:1347.8px;top:1050.3px;font-size:16px;font-weight:bold;color:#2e8b3d;transform:scaleX(0.8600);">31.56%</div>
<div class="pill" style="left:1322px;top:1095.5px;width:83.5px"></div>
<svg class="abs" style="left:1334.0px;top:1100.5px" width="10" height="16" viewBox="0 0 10 16"><path d="M5 13.5V4M2.3 6.7L5 4l2.7 2.7" fill="none" stroke="#2e8b3d" stroke-width="1.5" stroke-linecap="round" stroke-linejoin="round"/></svg>
<div class="t" style="left:1355.5px;top:1101.4px;font-size:16px;font-weight:bold;color:#2e8b3d;transform:scaleX(0.8600);">4.79%</div>
<div class="t" style="left:50.0px;top:181.6px;font-size:21px;color:#9aa1ab;transform:scaleX(0.9233);">Search for a location...</div>
<div class="t" style="left:910.5px;top:172.7px;font-size:27px;font-weight:bold;color:#0b0b0b;transform:scaleX(0.8857);">Summary</div>
<div class="t" style="left:1010.2px;top:351.6px;font-size:44.5px;font-weight:bold;color:#1e2226;transform:scaleX(0.8313);">8356</div>
<div class="t" style="left:1010.2px;top:410.4px;font-size:21px;color:#838b96;transform:scaleX(0.9316);">Residential</div>
<div class="t" style="left:1290.3px;top:351.6px;font-size:44.5px;font-weight:bold;color:#1e2226;transform:scaleX(0.8296);">343</div>
<div class="t" style="left:1290.3px;top:410.4px;font-size:21px;color:#838b96;transform:scaleX(0.9126);">Businesses</div>
<div class="t" style="left:1010.2px;top:533.1px;font-size:44.5px;font-weight:bold;color:#1e2226;transform:scaleX(0.8313);">8699</div>
<div class="t" style="left:1010.2px;top:592.0px;font-size:21px;color:#838b96;transform:scaleX(0.9358);">Letterboxes</div>
<div class="t" style="left:1292.3px;top:533.1px;font-size:44.5px;font-weight:bold;color:#1e2226;transform:scaleX(0.8186);">16452</div>
<div class="t" style="left:1290.3px;top:592.0px;font-size:21px;color:#838b96;transform:scaleX(0.9370);">Population</div>
<div class="t" style="left:917.6px;top:730.9px;font-size:24.5px;font-weight:bold;color:#0b0b0b;transform:scaleX(0.9230);">Education</div>
<div class="t" style="left:951.8px;top:822.8px;font-size:21.5px;font-weight:bold;color:#0b0b0b;transform:scaleX(0.8321);">Education Attendance</div>
<div class="t" style="left:952.0px;top:892.8px;font-size:21px;color:#111;transform:scaleX(0.9209);">Preschool</div>
<div class="t" style="left:952.0px;top:943.6px;font-size:21px;color:#111;transform:scaleX(0.9574);">Primary - government</div>
<div class="t" style="left:952.0px;top:996.9px;font-size:21px;color:#111;transform:scaleX(0.9544);">Primary - catholic</div>
<div class="t" style="left:952.0px;top:1047.7px;font-size:21px;color:#111;transform:scaleX(0.9518);">Primary - non-govern...</div>
<div class="t" style="left:952.0px;top:1098.7px;font-size:21px;color:#111;transform:scaleX(0.9626);">Primary - total</div>
<div class="t" style="left:1263.7px;top:892.8px;font-size:21px;font-weight:bold;color:#0b0b0b;transform:scaleX(0.8627);">9.4%</div>
<div class="t" style="left:1268.5px;top:943.6px;font-size:21px;font-weight:bold;color:#0b0b0b;transform:scaleX(0.8684);">22%</div>
<div class="t" style="left:1263.7px;top:996.9px;font-size:21px;font-weight:bold;color:#0b0b0b;transform:scaleX(0.8627);">5.8%</div>
<div class="t" style="left:1263.7px;top:1047.7px;font-size:21px;font-weight:bold;color:#0b0b0b;transform:scaleX(0.8627);">4.2%</div>
<div class="t" style="left:1262.5px;top:1098.7px;font-size:21px;font-weight:bold;color:#0b0b0b;transform:scaleX(0.8481);">27.8%</div>
</body></html>
